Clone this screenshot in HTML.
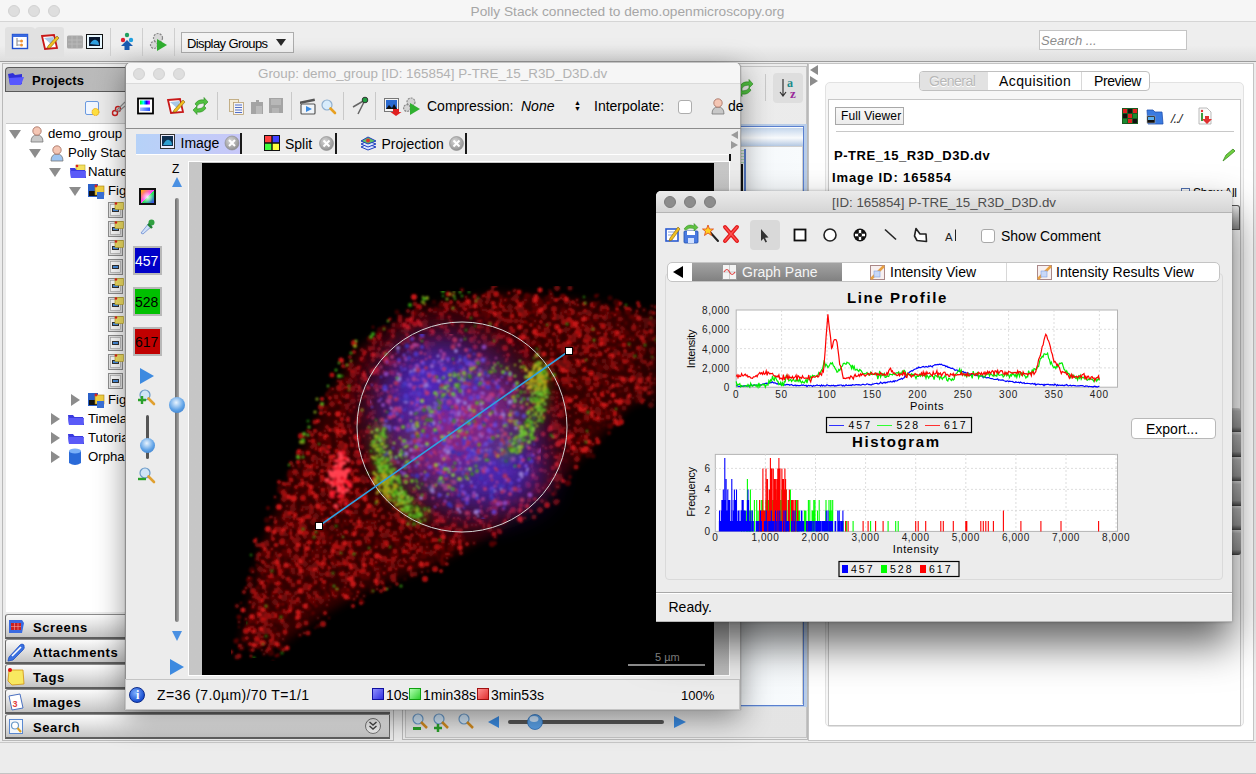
<!DOCTYPE html>
<html><head><meta charset="utf-8">
<style>
*{box-sizing:border-box;margin:0;padding:0}
html,body{width:1256px;height:774px;overflow:hidden;background:#ececec;font-family:"Liberation Sans",sans-serif;font-size:13px;color:#000;position:relative}
.a{position:absolute}
.tl{position:absolute;width:12px;height:12px;border-radius:50%;background:#dedede;border:1px solid #d2d2d2}
.t{position:absolute;white-space:nowrap;line-height:1}
.b{font-weight:bold}
.sep{position:absolute;width:1px;background:#c9c9c9}
.tri-d{position:absolute;width:0;height:0;border-left:6px solid transparent;border-right:6px solid transparent;border-top:10px solid #8a8a8a}
.tri-r{position:absolute;width:0;height:0;border-top:6px solid transparent;border-bottom:6px solid transparent;border-left:10px solid #8a8a8a}
.acc{position:absolute;left:5px;width:385px;height:25px;border-left:1px solid #6a6a6a;border-bottom:2px solid #5e5e5e;border-top:1px solid #8a8a8a;border-radius:3px 0 0 0;background:linear-gradient(#fafafa,#e6e6e6 40%,#c4c4c4);}
.acc span{position:absolute;left:27px;top:5px;font-weight:bold;font-size:13px;letter-spacing:0.6px}
</style></head><body>

<!-- main title bar -->
<div class="a" style="left:0;top:0;width:1256px;height:22px;background:#f6f6f6;border-bottom:1px solid #d5d5d5"></div>
<div class="tl" style="left:8px;top:5px"></div>
<div class="tl" style="left:28px;top:5px"></div>
<div class="tl" style="left:48px;top:5px"></div>
<div class="t" style="left:470.5px;top:5px;font-size:13.7px;color:#a6a6a6">Polly Stack connected to demo.openmicroscopy.org</div>

<!-- main toolbar -->
<div class="a" style="left:0;top:22px;width:1256px;height:40px;background:linear-gradient(#eeeeee 60%,#dedede);border-bottom:1px solid #9c9c9c"></div>
<svg class="a" style="left:0;top:22px" width="180" height="40" viewBox="0 22 180 40">
 <path d="M5,57 V30 Q5,27 8,27 H31 Q34,27 35,29 Q36,27 39,27 H61 Q64,27 64,30 V57 Z" fill="#e1e1e1"/>
 <rect x="12.5" y="34.5" width="15" height="14" fill="#fff" stroke="#2050d0" stroke-width="1.4"/>
 <rect x="12.5" y="34.5" width="15" height="2.5" fill="#3a6ae0"/>
 <path d="M17,38 V46 M17,41 H20 M17,45 H20" stroke="#999" stroke-width="1.2" fill="none"/>
 <circle cx="21.5" cy="41" r="1.5" fill="#f09030"/><circle cx="21.5" cy="45" r="1.5" fill="#f09030"/>
 <path d="M42,36 L54,35 L57,48 L45,49 Z" fill="#fff" stroke="#c81818" stroke-width="1.8"/>
 <path d="M44,38 L54,37 L52,45 Z" fill="#a8c8e8"/>
 <path d="M48,46 L57,36 L59,38 L50,48 L47,48 Z" fill="#f0c020" stroke="#806010" stroke-width="0.6"/>
 <rect x="67" y="35.5" width="16" height="13" rx="1.5" fill="#a8a8a8"/>
 <path d="M68,40 H82 M68,44 H82 M72,36 V48 M77,36 V48" stroke="#bcbcbc" stroke-width="0.8"/>
 <rect x="86.5" y="34.5" width="16" height="14" fill="#e8f8ff" stroke="#111" stroke-width="1"/>
 <rect x="89" y="37" width="11" height="9" fill="#0a1830"/>
 <path d="M90,44 Q93,39 96,40 Q99,41 99,45 Z" fill="#30a0e0"/>
 <line x1="110.5" y1="28" x2="110.5" y2="56" stroke="#cfcfcf"/>
 <circle cx="127" cy="35" r="2.2" fill="#20a060"/><circle cx="123" cy="40" r="2.2" fill="#e02030"/><circle cx="131" cy="40" r="2.2" fill="#20a0e0"/>
 <path d="M127,40 L121,46 H124.5 V50 H129.5 V46 H133 Z" fill="#1a5ab0"/>
 <line x1="142.5" y1="28" x2="142.5" y2="56" stroke="#cfcfcf"/>
 <circle cx="158" cy="38" r="4.5" fill="#d8d8d8" stroke="#888" stroke-width="1.2" stroke-dasharray="2,1.2"/>
 <circle cx="154" cy="45" r="3.5" fill="#d8d8d8" stroke="#888" stroke-width="1.2" stroke-dasharray="2,1.2"/>
 <path d="M157,39 L167,45 L157,51 Z" fill="#30b030"/>
 <line x1="174.5" y1="28" x2="174.5" y2="56" stroke="#cfcfcf"/>
</svg>

<div class="t" style="left:1039px;top:30px;width:148px;height:20px;border:1px solid #c4c4c4;background:#fff"></div>
<div class="t" style="left:1041px;top:34px;font-size:13px;font-style:italic;color:#8c8c8c">Search ...</div>
<div class="a" style="left:181px;top:32px;width:113px;height:21px;border:1px solid #adadad;background:#f4f4f4"></div>
<div class="t" style="left:187px;top:36.5px;font-size:13px;letter-spacing:-0.6px">Display Groups</div>
<div class="a" style="left:275.5px;top:39px;width:0;height:0;border-left:5.5px solid transparent;border-right:5.5px solid transparent;border-top:7px solid #2a2a2a"></div>

<!-- status bar -->
<div class="a" style="left:0;top:742px;width:1256px;height:32px;background:#ececec;border-top:1px solid #c8c8c8;border-bottom:1px solid #c4c4c4"></div>

<!-- LEFT PANEL -->
<div class="a" style="left:2px;top:63px;width:392px;height:678px;border:1px solid #b9b9b9;background:#ececec"></div>
<div class="a" style="left:5px;top:67px;width:388px;height:25px;border:1px solid #5a5a5a;border-right:none;border-radius:4px 0 0 0;background:linear-gradient(90deg,#b4b4b4,#c4c4c4 60%,#b0b0b0)"></div>
<div class="t b" style="left:32px;top:74px;font-size:13px;letter-spacing:0.1px">Projects</div>
<svg class="a" style="left:7px;top:71px" width="18" height="16" viewBox="0 0 18 16"><path d="M1,3 L6,2 L8,4 L15,3 L15,13 L3,14 Z" fill="#3030d8"/><path d="M2,7 L17,6 L14,14 L3,14 Z" fill="#5858ff"/></svg>
<svg class="a" style="left:84px;top:100px" width="42" height="18" viewBox="84 100 42 18">
 <rect x="85.5" y="101.5" width="13" height="13" rx="1.5" fill="#f0f6ff" stroke="#6a9ae0"/>
 <circle cx="95.5" cy="112" r="3.5" fill="#ffe040" stroke="#f0a000" stroke-width="1" stroke-dasharray="1.2,0.8"/>
 <circle cx="115" cy="113" r="2.5" fill="none" stroke="#d02020" stroke-width="1.4"/><circle cx="118" cy="109" r="2.5" fill="none" stroke="#d02020" stroke-width="1.4"/>
 <path d="M116,111 L125,102 M118,112 L125,106" stroke="#909090" stroke-width="1.2"/>
</svg>
<div class="a" style="left:6px;top:123px;width:387px;height:489px;background:#fff;border-top:1px solid #c9c9c9"></div>
<div class="a" style="left:9px;top:130px;width:0;height:0;border-left:6px solid transparent;border-right:6px solid transparent;border-top:9px solid #8c8c8c"></div>
<svg class="a" style="left:29px;top:125px" width="16" height="18" viewBox="0 0 16 18"><path d="M2,17 Q2,10 8,10 Q14,10 14,17 Z" fill="#c8c8c8" stroke="#777" stroke-width="0.8"/><circle cx="8" cy="6" r="4.2" fill="#f4c6b4" stroke="#a06a5a" stroke-width="0.8"/></svg>
<div class="t" style="left:48px;top:127px;font-size:13.2px">demo_group</div>
<div class="a" style="left:29px;top:149px;width:0;height:0;border-left:6px solid transparent;border-right:6px solid transparent;border-top:9px solid #8c8c8c"></div>
<svg class="a" style="left:49px;top:144px" width="16" height="18" viewBox="0 0 16 18"><path d="M2,17 Q2,10 8,10 Q14,10 14,17 Z" fill="#9ec4f0" stroke="#777" stroke-width="0.8"/><circle cx="8" cy="6" r="4.2" fill="#f4c6b4" stroke="#a06a5a" stroke-width="0.8"/></svg>
<div class="t" style="left:68px;top:146px;font-size:13.2px">Polly Stack</div>
<div class="a" style="left:49px;top:168px;width:0;height:0;border-left:6px solid transparent;border-right:6px solid transparent;border-top:9px solid #8c8c8c"></div>
<svg class="a" style="left:69px;top:164px" width="18" height="16" viewBox="0 0 18 16"><rect x="7" y="1" width="9" height="8" fill="#f4e060" stroke="#b8a020" stroke-width="0.6"/><circle cx="8" cy="2" r="1.3" fill="#e02020"/><path d="M1,4 L6,4 L7.5,6 L16,6 L17,14 L2,14 Z" fill="#3a3ae0"/><path d="M1,7 L17,7 L16,14 L2,14 Z" fill="#5a5af8"/></svg>
<div class="t" style="left:88px;top:165px;font-size:13.2px">Nature</div>
<div class="a" style="left:69px;top:187px;width:0;height:0;border-left:6px solid transparent;border-right:6px solid transparent;border-top:9px solid #8c8c8c"></div>
<svg class="a" style="left:87px;top:182px" width="18" height="18" viewBox="0 0 18 18"><rect x="1" y="2" width="10" height="13" fill="#2a60c8"/><rect x="2" y="9" width="8" height="5" fill="#111"/><rect x="8" y="4" width="9" height="9" fill="#f0d040" stroke="#b08010" stroke-width="0.6"/><circle cx="9" cy="4" r="1.4" fill="#e02020"/><rect x="10" y="10" width="7" height="7" fill="#3a70d8"/></svg>
<div class="t" style="left:108px;top:184px;font-size:13.2px">Fig</div>
<svg class="a" style="left:108px;top:202px" width="16" height="16" viewBox="0 0 16 16"><rect x="0.5" y="0.5" width="14" height="15" fill="#e8e8e8" stroke="#909090"/><rect x="2.5" y="2.5" width="10" height="11" fill="#fff" stroke="#a0a0a0" stroke-width="0.6"/><rect x="4" y="6" width="7" height="4" fill="#333"/><rect x="5" y="7" width="5" height="2" fill="#4a90e0"/><rect x="7" y="0.5" width="8.5" height="7" fill="#f6e466" stroke="#b8a020" stroke-width="0.6"/><circle cx="8" cy="1.5" r="1.2" fill="#e02020"/></svg>
<svg class="a" style="left:108px;top:221px" width="16" height="16" viewBox="0 0 16 16"><rect x="0.5" y="0.5" width="14" height="15" fill="#e8e8e8" stroke="#909090"/><rect x="2.5" y="2.5" width="10" height="11" fill="#fff" stroke="#a0a0a0" stroke-width="0.6"/><rect x="4" y="6" width="7" height="4" fill="#333"/><rect x="5" y="7" width="5" height="2" fill="#4a90e0"/><rect x="7" y="0.5" width="8.5" height="7" fill="#f6e466" stroke="#b8a020" stroke-width="0.6"/><circle cx="8" cy="1.5" r="1.2" fill="#e02020"/></svg>
<svg class="a" style="left:108px;top:240px" width="16" height="16" viewBox="0 0 16 16"><rect x="0.5" y="0.5" width="14" height="15" fill="#e8e8e8" stroke="#909090"/><rect x="2.5" y="2.5" width="10" height="11" fill="#fff" stroke="#a0a0a0" stroke-width="0.6"/><rect x="4" y="6" width="7" height="4" fill="#333"/><rect x="5" y="7" width="5" height="2" fill="#4a90e0"/><rect x="7" y="0.5" width="8.5" height="7" fill="#f6e466" stroke="#b8a020" stroke-width="0.6"/><circle cx="8" cy="1.5" r="1.2" fill="#e02020"/></svg>
<svg class="a" style="left:108px;top:259px" width="16" height="16" viewBox="0 0 16 16"><rect x="0.5" y="0.5" width="14" height="15" fill="#e8e8e8" stroke="#909090"/><rect x="2.5" y="2.5" width="10" height="11" fill="#fff" stroke="#a0a0a0" stroke-width="0.6"/><rect x="4" y="6" width="7" height="4" fill="#333"/><rect x="5" y="7" width="5" height="2" fill="#4a90e0"/></svg>
<svg class="a" style="left:108px;top:278px" width="16" height="16" viewBox="0 0 16 16"><rect x="0.5" y="0.5" width="14" height="15" fill="#e8e8e8" stroke="#909090"/><rect x="2.5" y="2.5" width="10" height="11" fill="#fff" stroke="#a0a0a0" stroke-width="0.6"/><rect x="4" y="6" width="7" height="4" fill="#333"/><rect x="5" y="7" width="5" height="2" fill="#4a90e0"/><rect x="7" y="0.5" width="8.5" height="7" fill="#f6e466" stroke="#b8a020" stroke-width="0.6"/><circle cx="8" cy="1.5" r="1.2" fill="#e02020"/></svg>
<svg class="a" style="left:108px;top:297px" width="16" height="16" viewBox="0 0 16 16"><rect x="0.5" y="0.5" width="14" height="15" fill="#e8e8e8" stroke="#909090"/><rect x="2.5" y="2.5" width="10" height="11" fill="#fff" stroke="#a0a0a0" stroke-width="0.6"/><rect x="4" y="6" width="7" height="4" fill="#333"/><rect x="5" y="7" width="5" height="2" fill="#4a90e0"/><rect x="7" y="0.5" width="8.5" height="7" fill="#f6e466" stroke="#b8a020" stroke-width="0.6"/><circle cx="8" cy="1.5" r="1.2" fill="#e02020"/></svg>
<svg class="a" style="left:108px;top:316px" width="16" height="16" viewBox="0 0 16 16"><rect x="0.5" y="0.5" width="14" height="15" fill="#e8e8e8" stroke="#909090"/><rect x="2.5" y="2.5" width="10" height="11" fill="#fff" stroke="#a0a0a0" stroke-width="0.6"/><rect x="4" y="6" width="7" height="4" fill="#333"/><rect x="5" y="7" width="5" height="2" fill="#4a90e0"/><rect x="7" y="0.5" width="8.5" height="7" fill="#f6e466" stroke="#b8a020" stroke-width="0.6"/><circle cx="8" cy="1.5" r="1.2" fill="#e02020"/></svg>
<svg class="a" style="left:108px;top:335px" width="16" height="16" viewBox="0 0 16 16"><rect x="0.5" y="0.5" width="14" height="15" fill="#e8e8e8" stroke="#909090"/><rect x="2.5" y="2.5" width="10" height="11" fill="#fff" stroke="#a0a0a0" stroke-width="0.6"/><rect x="4" y="6" width="7" height="4" fill="#333"/><rect x="5" y="7" width="5" height="2" fill="#4a90e0"/></svg>
<svg class="a" style="left:108px;top:354px" width="16" height="16" viewBox="0 0 16 16"><rect x="0.5" y="0.5" width="14" height="15" fill="#e8e8e8" stroke="#909090"/><rect x="2.5" y="2.5" width="10" height="11" fill="#fff" stroke="#a0a0a0" stroke-width="0.6"/><rect x="4" y="6" width="7" height="4" fill="#333"/><rect x="5" y="7" width="5" height="2" fill="#4a90e0"/><rect x="7" y="0.5" width="8.5" height="7" fill="#f6e466" stroke="#b8a020" stroke-width="0.6"/><circle cx="8" cy="1.5" r="1.2" fill="#e02020"/></svg>
<svg class="a" style="left:108px;top:373px" width="16" height="16" viewBox="0 0 16 16"><rect x="0.5" y="0.5" width="14" height="15" fill="#e8e8e8" stroke="#909090"/><rect x="2.5" y="2.5" width="10" height="11" fill="#fff" stroke="#a0a0a0" stroke-width="0.6"/><rect x="4" y="6" width="7" height="4" fill="#333"/><rect x="5" y="7" width="5" height="2" fill="#4a90e0"/></svg>
<div class="a" style="left:71px;top:394px;width:0;height:0;border-top:6px solid transparent;border-bottom:6px solid transparent;border-left:9px solid #8c8c8c"></div>
<svg class="a" style="left:87px;top:391px" width="18" height="18" viewBox="0 0 18 18"><rect x="1" y="2" width="10" height="13" fill="#2a60c8"/><rect x="2" y="9" width="8" height="5" fill="#111"/><rect x="8" y="4" width="9" height="9" fill="#f0d040" stroke="#b08010" stroke-width="0.6"/><circle cx="9" cy="4" r="1.4" fill="#e02020"/><rect x="10" y="10" width="7" height="7" fill="#3a70d8"/></svg>
<div class="t" style="left:108px;top:393px;font-size:13.2px">Fig</div>
<div class="a" style="left:51px;top:413px;width:0;height:0;border-top:6px solid transparent;border-bottom:6px solid transparent;border-left:9px solid #8c8c8c"></div>
<svg class="a" style="left:67px;top:411px" width="18" height="16" viewBox="0 0 18 16"><path d="M1,4 L6,4 L7.5,6 L16,6 L17,14 L2,14 Z" fill="#3a3ae0"/><path d="M1,7 L17,7 L16,14 L2,14 Z" fill="#5a5af8"/></svg>
<div class="t" style="left:88px;top:412px;font-size:13.2px">Timela</div>
<div class="a" style="left:51px;top:432px;width:0;height:0;border-top:6px solid transparent;border-bottom:6px solid transparent;border-left:9px solid #8c8c8c"></div>
<svg class="a" style="left:67px;top:430px" width="18" height="16" viewBox="0 0 18 16"><path d="M1,4 L6,4 L7.5,6 L16,6 L17,14 L2,14 Z" fill="#3a3ae0"/><path d="M1,7 L17,7 L16,14 L2,14 Z" fill="#5a5af8"/></svg>
<div class="t" style="left:88px;top:431px;font-size:13.2px">Tutoria</div>
<div class="a" style="left:51px;top:451px;width:0;height:0;border-top:6px solid transparent;border-bottom:6px solid transparent;border-left:9px solid #8c8c8c"></div>
<svg class="a" style="left:68px;top:448px" width="14" height="18" viewBox="0 0 14 18"><path d="M1,3 L1,15 Q7,19 13,15 L13,3 Z" fill="#2a6ad8"/><ellipse cx="7" cy="3" rx="6" ry="2.5" fill="#7ab0f8"/></svg>
<div class="t" style="left:88px;top:450px;font-size:13.2px">Orpha</div>

<div class="acc" style="top:614px"><span>Screens</span></div>
<div class="acc" style="top:639px"><span>Attachments</span></div>
<div class="acc" style="top:664px"><span>Tags</span></div>
<div class="acc" style="top:689px"><span>Images</span></div>
<div class="acc" style="top:714px;width:385px;border-right:1px solid #6a6a6a"><span>Search</span></div>
<svg class="a" style="left:5px;top:614px" width="24" height="125" viewBox="5 614 24 125">
 <path d="M9,620 L22,620 L24,623 L22,633 L9,633 Z" fill="#3a6ae0"/><rect x="11" y="623" width="10" height="7" fill="#c82020"/><path d="M11,626.5 H21 M14.5,623 V630 M18,623 V630" stroke="#f4a0a0" stroke-width="0.6"/>
 <path d="M9,657 L20,645 Q22,643 24,645 L24,646 Q25,648 23,650 L13,660 L8,661 Z" fill="#3a70e0" stroke="#2050c0" stroke-width="0.8"/><path d="M12,656 L21,647" stroke="#fff" stroke-width="1.6"/>
 <path d="M9,670 L23,670 L24,684 L12,685 L8,681 Z" fill="#f8e860" stroke="#d09010" stroke-width="0.8"/><circle cx="10" cy="670" r="2" fill="#e01010"/>
 <path d="M9,696 L20,694 L23,708 L12,710 Z" fill="#fff" stroke="#4a70c0" stroke-width="1"/><text x="12.5" y="707" font-family="Liberation Sans" font-size="9" font-weight="bold" fill="#e04040">3</text>
 <rect x="9.5" y="719.5" width="13" height="14" fill="#f4f8fc" stroke="#5a88d0"/><circle cx="15" cy="725.5" r="3.5" fill="#fff" stroke="#6a9ac8" stroke-width="1.2"/><path d="M17.5,728 L21,732" stroke="#e0a020" stroke-width="2"/>
</svg>
<svg class="a" style="left:364px;top:717px" width="18" height="18" viewBox="0 0 18 18"><circle cx="9" cy="9" r="7.5" fill="#f0f0f0" stroke="#777" stroke-width="1"/><path d="M5.5,5 L9,8 L12.5,5 M5.5,9 L9,12 L12.5,9" stroke="#444" stroke-width="1.4" fill="none"/></svg>

<!-- MIDDLE PANEL -->
<div class="a" style="left:402px;top:63px;width:406px;height:677px;border:1px solid #b9b9b9;background:#ececec"></div>
<div class="a" style="left:405px;top:66px;width:402px;height:672px;border:1px solid #c4c4c4;background:linear-gradient(#ececec,#e4e4e4)"></div>
<div class="a" style="left:773px;top:73px;width:30px;height:30px;background:#dedede;border-radius:4px"></div>
<div class="sep" style="left:765px;top:74px;height:27px"></div>
<svg class="a" style="left:738px;top:79px" width="18" height="18" viewBox="193 97 18 18">
 <path d="M195,104 Q198,99 204,100 L204,97.5 L208,102 L204,106 L204,103 Q199,103 197,106 Z" fill="#50c040" stroke="#2a8a20" stroke-width="0.6"/>
 <path d="M206,108 Q203,113 197,112 L197,114.5 L193,110 L197,106 L197,109 Q202,109 204,106 Z" fill="#50c040" stroke="#2a8a20" stroke-width="0.6"/>
</svg>


<svg class="a" style="left:776px;top:76px" width="26" height="24" viewBox="0 0 26 24"><path d="M7,3 V19 M4,16 L7,20 L10,16" stroke="#333" stroke-width="1.2" fill="none"/><text x="11" y="11" font-family="Liberation Serif" font-weight="bold" font-size="12" fill="#1a8a8a">a</text><text x="14" y="22" font-family="Liberation Serif" font-weight="bold" font-size="13" fill="#9a2a9a">z</text></svg>
<div class="a" style="left:405px;top:124px;width:402px;height:583px;background:#b9cde8"></div>
<div class="a" style="left:406px;top:126px;width:398px;height:580px;border:1.5px solid #5a80d0;background:linear-gradient(90deg,#e4e9ef,#f8fbfd)"></div>
<div class="a" style="left:407.5px;top:127.5px;width:395px;height:18px;background:linear-gradient(#c4d6ec,#f8fafc 55%,#b4c8e2)"></div>
<div class="a" style="left:407.5px;top:145.5px;width:395px;height:1.5px;background:#cfcfcf"></div>
<div class="a" style="left:802px;top:147px;width:1px;height:557px;background:#d0d0d0"></div>
<div class="a" style="left:744px;top:149px;width:1.5px;height:400px;background:#5a80d0"></div>
<div class="a" style="left:741px;top:164px;width:2px;height:385px;background:#111"></div>
<div class="a" style="left:741px;top:150px;width:3px;height:14px;background:repeating-linear-gradient(#b0d8b0 0,#b0d8b0 1px,#e8e8e8 1px,#e8e8e8 3px)"></div>
<svg class="a" style="left:410px;top:712px" width="280" height="22" viewBox="410 712 280 22">
 <circle cx="418" cy="719" r="5" fill="#cfe4f6" stroke="#6a9ac8" stroke-width="1.2"/><path d="M421,722 L427,728" stroke="#d08a20" stroke-width="2.5"/><rect x="413" y="727" width="8" height="3" fill="#2aa02a"/>
 <circle cx="439" cy="719" r="5" fill="#cfe4f6" stroke="#6a9ac8" stroke-width="1.2"/><path d="M442,722 L448,728" stroke="#d08a20" stroke-width="2.5"/><path d="M434,728 h8 M438,724 v8" stroke="#2aa02a" stroke-width="2.5"/>
 <circle cx="464" cy="719" r="5" fill="#cfe4f6" stroke="#6a9ac8" stroke-width="1.2"/><path d="M467,722 L473,728" stroke="#d08a20" stroke-width="2.5"/>
 <path d="M499,716 L488,722 L499,728 Z" fill="#3a8ae0"/>
 <rect x="508" y="720" width="156" height="4" rx="2" fill="#555"/>
 <circle cx="535" cy="722" r="7.5" fill="#5aa0e6" stroke="#3070b8" stroke-width="0.8"/><ellipse cx="534" cy="719" rx="4.5" ry="3" fill="#e8f4ff" opacity="0.8"/>
 <path d="M674,716 L686,722 L674,728 Z" fill="#3a8ae0"/>
</svg>


<!-- RIGHT PANEL -->
<div class="a" style="left:808px;top:63px;width:446px;height:678px;border:1px solid #c4c4c4;background:#fff"></div>
<div class="a" style="left:825px;top:82px;width:419px;height:645px;border:1px solid #e2e2e2;border-radius:5px;background:#f6f6f6"></div>
<div class="a" style="left:828px;top:99px;width:413px;height:627px;border:1px solid #c8c8c8;background:linear-gradient(#fff,#fff)"></div>
<div class="a" style="left:919px;top:71px;width:231px;height:20px;border:1px solid #c0c0c0;border-radius:4px;background:#fff;overflow:hidden">
  <div class="a" style="left:0;top:0;width:68px;height:19px;background:#e2e2e2"></div>
  <div class="a" style="left:161px;top:0;width:1px;height:19px;background:#d8d8d8"></div>
</div>
<div class="t" style="left:929px;top:74px;font-size:14px;color:#b8b8b8;text-shadow:0 1px 0 #fff;letter-spacing:-0.5px">General</div>
<div class="t" style="left:999px;top:74px;font-size:14px;letter-spacing:0.4px">Acquisition</div>
<div class="t" style="left:1094px;top:74px;font-size:14px;letter-spacing:-0.4px">Preview</div>
<div class="a" style="left:835px;top:107px;width:69px;height:18px;border:1px solid #a8a8a8;background:linear-gradient(#f8f8f8,#ececec)"></div>
<div class="t" style="left:841px;top:110px;font-size:12px;letter-spacing:0.1px">Full Viewer</div>
<svg class="a" style="left:1120px;top:106px" width="120" height="58" viewBox="1120 106 120 58">
 <rect x="1122" y="108" width="16" height="16" fill="#1a5a20"/>
 <rect x="1123" y="109" width="4" height="4" fill="#e02020"/><rect x="1128" y="109" width="4" height="4" fill="#111"/><rect x="1133" y="109" width="4" height="4" fill="#e02020"/>
 <rect x="1123" y="114" width="4" height="4" fill="#111"/><rect x="1128" y="114" width="4" height="4" fill="#e02020"/><rect x="1133" y="114" width="4" height="4" fill="#1a8a30"/>
 <rect x="1123" y="119" width="4" height="4" fill="#1a8a30"/><rect x="1128" y="119" width="4" height="4" fill="#e02020"/><rect x="1133" y="119" width="4" height="4" fill="#111"/>
 <path d="M1147,110 L1153,110 L1155,112 L1162,112 L1163,124 L1148,124 Z" fill="#3a7ae0" stroke="#2050b0" stroke-width="0.8"/>
 <rect x="1147" y="116" width="8" height="7" fill="#111" stroke="#aaa" stroke-width="0.6"/><rect x="1148" y="117" width="6" height="3" fill="#5ab0f0"/>
 <text x="1171" y="123" font-family="Liberation Sans" font-style="italic" font-size="13" fill="#222" letter-spacing="-1">/../</text>
 <path d="M1199,108 L1207,108 L1211,112 L1211,124 L1199,124 Z" fill="#fafafa" stroke="#aaa" stroke-width="0.8"/>
 <rect x="1201" y="113" width="2" height="8" fill="#3a9a3a"/><circle cx="1202" cy="111" r="1.2" fill="#e03030"/>
 <path d="M1205,116 H1209 V119 H1212 L1207,124 L1202,119 H1205 Z" fill="#e03030"/>
 <path d="M1223,161 L1226,155 L1233,149 L1235,151 L1228,157 Z" fill="#70d040" stroke="#3a8a20" stroke-width="0.8"/>
</svg>
<div class="a" style="left:836px;top:131px;width:398px;height:1px;background:#c8c8c8"></div>
<div class="t b" style="left:834px;top:149px;font-size:13px;letter-spacing:0.55px">P-TRE_15_R3D_D3D.dv</div>
<div class="t b" style="left:832px;top:171px;font-size:13px;letter-spacing:0.9px">Image ID: 165854</div>
<div class="t b" style="left:832px;top:189px;font-size:13px;letter-spacing:0.9px">Owner: Polly Stack</div>
<div class="a" style="left:1181px;top:188px;width:9px;height:9px;border:1px solid #5070b0;background:#fff"></div>
<div class="t" style="left:1193px;top:187px;font-size:12px;letter-spacing:-0.3px">Show All</div>
<div class="a" style="left:810px;top:65px;width:0;height:0;border-top:5px solid transparent;border-bottom:5px solid transparent;border-right:8px solid #8c8c8c"></div>
<div class="a" style="left:810px;top:76px;width:0;height:0;border-top:5px solid transparent;border-bottom:5px solid transparent;border-left:8px solid #8c8c8c"></div>
<div class="a" style="left:1232px;top:205px;width:8px;height:25px;background:linear-gradient(#eeeeee,#8c8c8c);border:1px solid #555;border-left:none;border-radius:0 3px 0 0"></div>
<div class="a" style="left:1232px;top:408px;width:9px;height:147px;background:repeating-linear-gradient(#d8d8d8 0,#b4b4b4 3px,#989898 19px,#5a5a5a 23px,#3a3a3a 24.5px);border-radius:0 3px 3px 0"></div>



<!-- IMAGE WINDOW -->
<div class="a" style="left:125px;top:63px;width:616px;height:647px;background:#ececec;box-shadow:0 8px 30px rgba(0,0,0,0.42),0 0 1px rgba(0,0,0,0.6);border-left:1px solid #8e8e8e;border-right:1px solid #a8a8a8;border-radius:5px 5px 0 0;overflow:hidden">
 <div class="a" style="left:0;top:0;width:616px;height:21px;background:#f6f6f6;border-bottom:1px solid #dadada"></div>
</div>
<div class="tl" style="left:133px;top:68px"></div>
<div class="tl" style="left:153px;top:68px"></div>
<div class="tl" style="left:173px;top:68px"></div>
<div class="t" style="left:258px;top:67px;font-size:13.4px;color:#b2b2b2">Group: demo_group [ID: 165854] P-TRE_15_R3D_D3D.dv</div>
<!-- toolbar -->
<div class="a" style="left:125px;top:128px;width:616px;height:1px;background:#8c8c8c"></div>
<svg class="a" style="left:130px;top:90px" width="300" height="32" viewBox="130 90 300 32">
 <defs><linearGradient id="rb" x1="0" x2="1"><stop offset="0" stop-color="#0f0"/><stop offset="0.35" stop-color="#0ff"/><stop offset="0.65" stop-color="#00f"/><stop offset="1" stop-color="#f0f"/></linearGradient>
 <linearGradient id="bb" x1="0" x2="1"><stop offset="0" stop-color="#a8c0ff"/><stop offset="1" stop-color="#2050ff"/></linearGradient></defs>
 <rect x="138" y="98.5" width="15" height="15" fill="#fff" stroke="#000" stroke-width="1.8"/>
 <rect x="140" y="100.5" width="10" height="4" fill="url(#rb)"/><rect x="140" y="107.5" width="10" height="3.5" fill="url(#bb)"/>
 <path d="M168,100 L180,99 L183,112 L171,113 Z" fill="#fff" stroke="#c81818" stroke-width="1.8"/>
 <path d="M170,102 L180,101 L178,109 Z" fill="#a8c8e8"/>
 <path d="M174,110 L183,100 L185,102 L176,112 L173,112 Z" fill="#f0c020" stroke="#806010" stroke-width="0.6"/>
 <path d="M195,104 Q198,99 204,100 L204,97.5 L208,102 L204,106 L204,103 Q199,103 197,106 Z" fill="#50c040" stroke="#2a8a20" stroke-width="0.6"/>
 <path d="M206,108 Q203,113 197,112 L197,114.5 L193,110 L197,106 L197,109 Q202,109 204,106 Z" fill="#50c040" stroke="#2a8a20" stroke-width="0.6"/>
 <rect x="229.5" y="99.5" width="9" height="12" fill="#f4ecd8" stroke="#b8a070" stroke-width="0.8"/>
 <rect x="233.5" y="102.5" width="10" height="12" fill="#f4f4f8" stroke="#b8a070" stroke-width="0.8"/>
 <path d="M235,105 H242 M235,107.5 H242 M235,110 H242 M235,112.5 H242" stroke="#4060c0" stroke-width="0.9"/>
 <path d="M251,102 H256 V100 H259 V102 H263 V114 H251 Z" fill="#a4a4a4"/><rect x="256" y="106" width="6" height="8" fill="#bababa"/>
 <rect x="269" y="98" width="14" height="15" fill="#a4a4a4"/><rect x="271" y="99" width="10" height="6" fill="#b8b8b8"/><rect x="272" y="108" width="7" height="5" fill="#b4b4b4"/>
 <path d="M300,104 L315,101 L314.5,98.5 L300,101.5 Z" fill="#555"/>
 <rect x="301" y="104" width="14" height="10" rx="1" fill="#f0f4f8" stroke="#555" stroke-width="1.2"/>
 <path d="M306,106 L312,109 L306,112 Z" fill="#3a8ae0"/>
 <circle cx="327" cy="105" r="5" fill="#d8ecfc" stroke="#90b0d0" stroke-width="1.2"/>
 <path d="M330.5,108.5 L335,113" stroke="#e8a020" stroke-width="2.6" stroke-linecap="round"/>
 <path d="M365,100 L353,107 M365,100 L358,114" stroke="#666" stroke-width="1.5"/>
 <circle cx="365" cy="100" r="2.8" fill="#20a040" stroke="#333" stroke-width="1"/>
 <rect x="384.5" y="98.5" width="14" height="13" fill="#f4f4f4" stroke="#777"/>
 <rect x="386" y="100" width="11" height="9" fill="#2a6ad0"/><path d="M386,109 L389,105 L392,108 L394,104 L397,109 Z" fill="#111"/>
 <path d="M393,109 H399 V112 H401.5 L396,116 L390.5,112 H393 Z" fill="#e02020"/>
 <circle cx="411" cy="102" r="4" fill="#d4d4d4" stroke="#888" stroke-width="1.2" stroke-dasharray="2,1"/>
 <circle cx="407" cy="108" r="3.4" fill="#d4d4d4" stroke="#888" stroke-width="1.2" stroke-dasharray="2,1"/>
 <path d="M410,103 L420,109 L410,115 Z" fill="#30b030"/>
</svg>
<svg class="a" style="left:710px;top:97px" width="16" height="18" viewBox="0 0 16 18"><path d="M2,17 Q2,10 8,10 Q14,10 14,17 Z" fill="#c8c8c8" stroke="#777" stroke-width="0.8"/><circle cx="8" cy="6" r="4.2" fill="#f4c6b4" stroke="#a06a5a" stroke-width="0.8"/></svg>
<div class="sep" style="left:217px;top:92px;height:28px"></div>
<div class="sep" style="left:291px;top:92px;height:28px"></div>
<div class="sep" style="left:343px;top:92px;height:28px"></div>
<div class="sep" style="left:375px;top:92px;height:28px"></div>
<div class="t" style="left:427px;top:99px;font-size:14px">Compression:</div>
<div class="t" style="left:521px;top:99px;font-size:14px;font-style:italic">None</div>
<div class="t" style="left:574px;top:100px;font-size:7px;line-height:6px">&#9650;<br>&#9660;</div>
<div class="t" style="left:594px;top:99px;font-size:14px">Interpolate:</div>
<div class="a" style="left:678px;top:100px;width:14px;height:14px;border:1px solid #adadad;border-radius:3px;background:#fff"></div>
<div class="t" style="left:728px;top:99px;font-size:14px">de</div>
<!-- tabs -->
<div class="a" style="left:136px;top:134px;width:104px;height:20px;background:linear-gradient(90deg,#b6d2f8,#c8c8f8)"></div>
<div class="a" style="left:240px;top:133px;width:1.5px;height:21px;background:#1a1a1a"></div>
<div class="a" style="left:335px;top:133px;width:1.5px;height:21px;background:#1a1a1a"></div>
<div class="a" style="left:465px;top:133px;width:1.5px;height:21px;background:#1a1a1a"></div>
<svg class="a" style="left:136px;top:130px" width="340" height="26" viewBox="136 130 340 26">
 <defs><radialGradient id="xg" cx="0.4" cy="0.35" r="0.7"><stop offset="0" stop-color="#d8d8d8"/><stop offset="1" stop-color="#8c8c8c"/></radialGradient></defs>
 <rect x="160.5" y="134.5" width="14" height="14" fill="#eef" stroke="#333" stroke-width="1"/><rect x="162" y="136" width="11" height="10" fill="#103050"/><path d="M163,145 Q166,139 169,140 Q172,141 172,145 Z" fill="#30a0d0"/>
 <circle cx="232" cy="143" r="7" fill="url(#xg)" stroke="#8a8a8a" stroke-width="0.6"/><path d="M229,140 L235,146 M235,140 L229,146" stroke="#fff" stroke-width="2"/>
 <rect x="265" y="136" width="7" height="7" fill="#ff4040"/><rect x="272" y="136" width="7" height="7" fill="#4040ff"/><rect x="265" y="143" width="7" height="7" fill="#40ff40"/><rect x="272" y="143" width="7" height="7" fill="#ffff40"/>
 <path d="M272,136 V150 M265,143 H279" stroke="#111" stroke-width="1.4"/><rect x="264.5" y="135.5" width="15" height="15" fill="none" stroke="#111" stroke-width="1"/>
 <circle cx="326.5" cy="143.5" r="7" fill="url(#xg)" stroke="#8a8a8a" stroke-width="0.6"/><path d="M323.5,140.5 L329.5,146.5 M329.5,140.5 L323.5,146.5" stroke="#fff" stroke-width="2"/>
 <path d="M361,147 L368,150 L376,147 L368,144 Z" fill="#e0e8ff" stroke="#2040c0" stroke-width="1"/>
 <path d="M361,144 L368,147 L376,144 L368,141 Z" fill="#e0e8ff" stroke="#2040c0" stroke-width="1"/>
 <path d="M361,141 L368,144 L376,141 L368,137 Z" fill="#60c060" stroke="#2040c0" stroke-width="1"/><circle cx="368" cy="140.5" r="2" fill="#e03030"/>
 <circle cx="456.5" cy="143.5" r="7" fill="url(#xg)" stroke="#8a8a8a" stroke-width="0.6"/><path d="M453.5,140.5 L459.5,146.5 M459.5,140.5 L453.5,146.5" stroke="#fff" stroke-width="2"/>
</svg>
<div class="t" style="left:180.5px;top:135.5px;font-size:14px">Image</div>
<div class="t" style="left:285px;top:137px;font-size:14px">Split</div>
<div class="t" style="left:381.5px;top:137px;font-size:14px">Projection</div>
<div class="a" style="left:136px;top:154px;width:593px;height:1px;background:#fff"></div>
<div class="a" style="left:729px;top:154px;width:2px;height:7px;background:#111"></div>
<div class="a" style="left:730.5px;top:130.5px;width:0;height:0;border-top:4px solid transparent;border-bottom:4px solid transparent;border-right:7px solid #9a9a9a"></div>
<div class="a" style="left:730.5px;top:141px;width:0;height:0;border-top:4px solid transparent;border-bottom:4px solid transparent;border-left:7px solid #9a9a9a"></div>
<!-- image panel -->
<div class="a" style="left:188px;top:161px;width:542px;height:515px;background:#fff"></div>
<div class="a" style="left:189px;top:162px;width:540px;height:513px;background:linear-gradient(90deg,#c6c6c6,#c8c8c8)"></div>
<div class="a" style="left:714px;top:162px;width:15px;height:513px;background:linear-gradient(#c8c8c8,#bcbcbc)"></div>
<svg class="a" style="left:202px;top:163px" width="512" height="512" viewBox="202 163 512 512">
<defs>
 <filter id="sb" x="0" y="0" width="100%" height="100%"><feGaussianBlur stdDeviation="1.3"/></filter>
 <filter id="bg" x="-30%" y="-30%" width="160%" height="160%"><feGaussianBlur stdDeviation="9"/></filter>
 <filter id="bg2" x="-50%" y="-50%" width="200%" height="200%"><feGaussianBlur stdDeviation="18"/></filter>
 <filter id="bg3" x="-50%" y="-50%" width="200%" height="200%"><feGaussianBlur stdDeviation="5"/></filter>
</defs>
<rect x="202" y="163" width="512" height="512" fill="#000"/>
<g style="isolation:isolate">
<path filter="url(#bg3)" opacity="0.7" fill="#4a0505" d="M240,645 L248,610 L263,542 L293,472 L327,400 L360,347 L418,309 L497,293 L575,300 L650,314 L720,322 L720,385 L632,404 L604,432 L570,470 L546,498 L490,535 L432,566 L370,588 L320,616 L280,646 Z"/>
<g filter="url(#sb)">
<path d="M422 536h0M548 412h0M375 569h0M595 384h0M277 567h0M385 558h0M423 324h0M398 516h0M320 434h0M312 435h0M313 599h0M296 487h0M322 568h0M409 538h0M280 574h0M263 562h0M347 523h0M479 502h0M321 510h0M541 335h0M663 333h0M579 406h0M625 351h0M576 397h0M641 399h0M356 380h0M585 451h0M623 356h0M375 528h0M610 328h0M269 615h0M527 443h0M535 391h0M525 367h0M274 637h0M368 542h0M508 355h0M447 309h0M267 651h0M585 311h0M426 347h0M505 521h0M585 352h0M399 410h0M576 405h0M370 349h0M597 439h0M437 373h0M500 313h0M374 370h0M290 528h0M361 526h0M552 379h0M301 526h0M419 458h0M325 613h0M457 512h0M549 430h0M622 369h0M356 495h0M638 303h0M431 385h0M469 314h0M393 336h0M557 360h0M654 339h0M301 544h0M310 586h0M451 302h0M284 484h0M453 525h0M420 503h0M572 326h0M431 533h0M474 332h0M306 586h0M511 328h0M368 574h0M339 402h0M578 332h0M374 428h0M488 316h0M307 570h0M305 472h0M377 372h0M298 599h0M347 390h0M440 388h0M467 544h0M305 563h0M379 338h0M308 485h0M592 400h0M481 363h0M290 567h0M323 509h0M383 372h0M273 539h0M418 520h0M351 515h0M341 574h0M639 306h0M656 307h0M400 325h0M595 394h0M504 319h0M642 402h0M445 311h0M666 399h0M497 449h0M343 366h0M315 522h0M420 468h0M393 558h0M290 601h0M598 418h0M330 398h0M460 331h0M343 473h0M641 388h0M359 456h0M460 504h0M450 529h0M346 561h0M423 428h0M559 346h0M279 482h0M276 616h0M442 542h0M427 382h0M352 474h0M341 500h0M297 550h0M350 487h0M337 509h0M450 528h0M310 491h0M486 295h0M390 500h0M517 301h0M280 597h0M321 579h0M471 486h0M590 388h0M377 584h0M413 338h0M372 430h0M364 495h0M341 505h0M250 644h0M527 350h0M368 508h0M411 567h0M326 480h0M277 604h0M593 412h0M341 489h0M329 414h0M260 598h0M314 474h0M329 464h0M257 622h0M566 402h0M651 383h0M595 388h0M358 445h0M483 486h0M644 331h0M274 593h0M307 503h0M354 352h0M403 343h0M468 518h0M585 400h0M596 403h0M365 352h0M441 571h0M402 415h0M470 332h0M645 362h0M566 302h0M669 360h0M362 534h0M362 410h0M357 470h0M330 457h0M541 470h0M353 606h0M564 383h0M536 356h0M443 380h0M570 337h0M584 304h0M432 409h0M323 479h0M554 315h0M263 597h0M352 462h0M428 399h0M374 339h0M421 437h0M407 320h0M277 591h0M329 568h0M564 367h0M361 603h0M482 427h0M364 354h0M661 330h0" stroke="#ae1010" stroke-width="4" stroke-linecap="round"/>
<path d="M357 569h0M461 530h0M561 478h0M314 603h0M344 594h0M650 387h0M386 561h0M395 503h0M267 557h0M291 608h0M499 317h0M396 486h0M275 597h0M335 545h0M652 392h0M411 561h0M274 578h0M414 452h0M310 539h0M525 392h0M358 417h0M296 593h0M283 540h0M353 501h0M391 480h0M399 565h0M404 509h0M446 530h0M388 520h0M300 560h0M643 340h0M662 376h0M432 482h0M540 347h0M350 357h0M395 515h0M443 485h0M299 574h0M624 401h0M607 315h0M564 414h0M350 509h0M403 417h0M581 354h0M471 516h0M542 501h0M530 347h0M495 399h0M373 350h0M390 497h0M421 352h0M516 308h0M577 318h0M624 381h0M560 455h0M341 389h0M562 313h0M477 377h0M362 350h0M267 542h0M451 540h0M362 497h0M520 352h0M470 307h0M361 585h0M271 625h0M305 529h0M442 450h0M288 529h0M513 299h0M509 371h0M566 406h0M348 405h0M314 577h0M432 466h0M494 514h0M569 383h0M593 403h0M381 509h0M569 341h0M615 363h0M364 482h0M510 498h0M509 473h0M288 522h0M499 335h0M449 338h0M457 460h0M289 565h0M622 328h0M353 514h0M608 349h0M325 551h0M259 580h0M310 571h0M351 430h0M429 349h0M259 554h0M324 582h0M620 417h0M586 354h0M299 539h0M254 604h0M317 500h0M323 465h0M267 613h0M570 321h0M644 320h0M641 347h0M359 414h0M554 377h0M358 439h0M278 645h0M415 424h0M622 357h0M395 552h0M346 575h0M634 372h0M605 344h0M588 384h0M630 395h0M642 378h0M626 340h0M527 483h0M568 330h0M636 315h0M324 521h0M358 419h0M257 545h0M283 623h0M237 606h0M347 408h0M359 498h0M653 326h0M270 645h0M537 305h0M518 429h0M324 537h0M556 317h0M521 321h0M341 436h0M433 525h0M488 481h0M328 519h0M381 582h0M312 447h0M492 291h0M575 406h0M345 472h0M408 311h0M444 489h0M419 459h0M610 388h0M388 372h0M554 314h0M511 311h0M660 360h0M570 314h0M305 537h0M260 545h0M363 577h0M414 509h0M401 344h0M292 572h0M546 371h0M521 521h0M346 503h0M581 321h0M328 596h0M391 371h0M542 389h0M455 538h0M441 560h0M587 360h0M536 337h0M483 373h0M628 398h0M295 548h0M466 464h0M362 392h0M557 398h0M353 505h0M485 376h0M348 418h0M486 358h0M621 400h0M481 305h0M322 464h0M580 440h0M620 304h0M259 634h0M339 446h0M335 516h0M507 502h0M626 380h0M545 471h0M409 524h0M292 602h0M630 310h0M538 390h0M576 431h0M482 513h0" stroke="#820a0a" stroke-width="4" stroke-linecap="round"/>
<path d="M532 477h0M305 474h0M602 394h0M268 553h0M547 326h0M574 349h0M456 416h0M644 342h0M440 520h0M291 480h0M375 515h0M427 564h0M598 442h0M398 477h0M610 356h0M336 429h0M480 396h0M488 363h0M295 524h0M332 375h0M401 528h0M371 525h0M670 385h0M313 466h0M505 335h0M432 540h0M563 366h0M460 547h0M347 500h0M399 383h0M336 592h0M423 536h0M623 338h0M395 551h0M337 451h0M512 316h0M256 594h0M536 327h0M299 582h0M324 508h0M667 396h0M366 379h0M381 429h0M273 640h0M362 359h0M630 370h0M613 333h0M286 519h0M600 354h0M605 338h0M582 384h0M410 546h0M411 367h0M454 525h0M338 485h0M410 548h0M486 517h0M572 322h0M341 443h0M426 552h0M280 571h0M618 353h0M618 385h0M651 323h0M285 632h0M322 482h0M338 547h0M440 558h0M494 534h0M604 410h0M575 352h0M278 635h0M601 404h0M300 568h0M492 503h0M368 541h0M371 564h0M414 345h0M519 292h0M295 540h0M308 453h0M294 499h0M267 582h0M525 323h0M393 579h0M447 488h0M648 334h0M313 441h0M369 528h0M479 327h0M624 345h0M640 393h0M441 351h0M449 429h0M323 490h0M361 496h0M376 386h0M322 477h0M348 389h0M427 443h0M521 505h0M310 542h0M305 472h0M574 350h0M359 368h0M399 510h0M456 536h0M587 419h0M552 360h0M448 294h0" stroke="#ae1010" stroke-width="5.0" stroke-linecap="round"/>
<path d="M325 482h0M546 380h0M437 547h0M353 372h0M359 543h0M354 480h0M303 498h0M260 558h0M414 490h0M583 438h0M495 508h0M345 563h0M341 428h0M388 352h0M442 520h0M593 305h0M285 495h0M520 305h0M386 543h0M410 349h0M358 491h0M547 505h0M331 556h0M421 555h0M307 467h0M354 343h0M407 515h0M596 378h0M415 324h0M389 562h0M450 471h0M304 533h0M641 333h0M589 349h0M315 534h0M502 305h0M410 321h0M640 380h0M345 446h0M563 350h0M359 462h0M669 326h0M282 542h0M496 294h0M351 545h0M521 338h0M436 539h0M521 315h0M621 422h0M557 426h0M569 320h0M456 447h0M578 364h0M311 570h0M425 579h0M301 436h0M603 341h0M567 365h0M513 510h0M557 327h0M633 378h0M560 347h0M257 639h0M442 459h0M286 528h0M472 340h0M579 334h0M414 456h0M591 346h0M572 349h0M502 305h0M632 357h0M668 318h0M603 326h0M277 529h0M364 495h0M569 343h0M367 511h0M435 569h0M424 497h0M278 566h0M376 427h0M501 441h0M551 371h0M393 391h0M528 485h0M346 389h0M356 437h0M588 380h0M625 361h0M505 348h0M363 571h0M310 492h0M419 307h0M335 546h0M586 340h0M246 631h0M351 552h0" stroke="#ae1010" stroke-width="6" stroke-linecap="round"/>
<path d="M325 431h0M607 330h0M353 501h0M322 623h0M486 310h0M538 304h0M648 387h0M344 428h0M575 369h0M425 509h0M332 548h0M444 369h0M517 320h0M401 532h0M436 487h0M600 402h0M376 570h0M563 453h0M308 513h0M505 300h0M447 558h0M410 487h0M443 533h0M412 525h0M442 450h0M492 310h0M343 559h0M294 502h0M289 549h0M503 523h0M416 558h0M267 631h0M428 517h0M357 596h0M466 297h0M473 332h0M497 414h0M389 331h0M577 365h0M489 315h0M391 515h0M338 535h0M618 370h0M506 346h0M377 460h0M342 396h0M403 383h0M509 504h0M411 569h0M389 513h0M570 305h0M317 538h0M448 333h0M285 634h0M284 567h0M438 525h0M381 345h0M548 297h0M300 635h0M331 585h0M568 335h0M624 341h0M339 431h0M534 445h0M530 317h0M492 310h0M368 386h0M370 559h0M433 386h0M597 348h0M511 470h0M577 370h0M256 539h0M485 463h0M264 570h0M450 321h0M427 542h0M406 544h0M525 511h0M307 593h0M639 367h0M305 493h0M463 540h0M484 528h0M652 306h0M495 364h0M474 543h0M326 453h0M634 324h0M370 424h0M328 452h0M399 395h0M330 463h0M485 363h0M418 412h0M462 459h0M500 331h0M500 486h0M345 405h0M413 508h0M572 380h0M477 469h0M438 318h0M331 513h0M364 554h0M275 518h0M442 302h0M668 372h0M309 495h0M456 537h0M452 546h0M479 444h0M332 591h0" stroke="#820a0a" stroke-width="3.0" stroke-linecap="round"/>
<path d="M596 317h0M540 311h0M584 410h0M401 501h0M301 485h0M299 453h0M587 329h0M529 455h0M544 307h0M400 520h0M397 496h0M511 461h0M477 427h0M547 371h0M589 343h0M314 459h0M441 315h0M301 528h0M391 363h0M484 337h0M344 432h0M577 328h0M393 577h0M294 563h0M355 574h0M587 337h0M283 492h0M392 462h0M328 574h0M634 328h0M357 530h0M342 548h0M341 395h0M606 383h0M518 309h0M262 583h0M564 380h0M363 559h0M496 398h0M288 485h0M323 624h0M282 533h0M441 548h0M337 467h0M347 396h0M381 542h0M560 442h0M501 336h0M477 301h0M564 322h0M546 330h0M584 410h0M344 544h0M316 466h0M418 531h0M422 565h0M628 402h0M337 563h0M339 388h0M272 617h0M311 508h0M630 356h0M383 357h0M266 554h0M511 416h0M561 371h0M385 534h0M572 312h0M371 534h0M538 328h0M336 430h0M446 305h0M295 472h0M565 362h0M554 309h0M414 313h0M431 410h0M640 356h0M495 343h0M341 425h0M488 296h0M293 499h0M254 631h0M263 545h0M668 398h0M342 383h0M301 591h0M379 335h0M473 382h0M253 591h0M556 476h0M321 407h0M561 430h0M539 451h0M252 629h0M392 471h0M582 403h0M329 489h0" stroke="#980c0c" stroke-width="6" stroke-linecap="round"/>
<path d="M284 598h0M259 615h0M581 409h0M499 503h0M263 620h0M318 506h0M468 302h0M530 409h0M618 423h0M373 372h0M422 420h0M552 363h0M353 584h0M647 334h0M535 332h0M540 378h0M294 498h0M301 561h0M421 324h0M262 586h0M358 573h0M377 369h0M335 594h0M628 310h0M570 400h0M307 548h0M622 338h0M554 317h0M620 402h0M294 515h0M606 309h0M394 462h0M649 379h0M252 617h0M405 552h0M358 528h0M351 579h0M639 334h0M476 314h0M339 434h0M270 575h0M520 519h0M322 564h0M479 522h0M262 643h0M481 436h0M279 507h0M422 339h0M384 426h0M576 324h0M302 520h0M571 352h0M475 406h0M535 300h0M586 449h0M287 514h0M268 529h0M432 332h0M591 373h0M558 444h0M414 297h0M292 525h0M386 359h0M315 569h0M339 431h0M355 479h0M427 344h0M640 381h0M551 428h0M377 556h0M263 584h0M318 563h0M666 382h0M357 453h0M326 437h0M419 552h0M417 526h0M510 341h0M585 407h0M617 333h0M555 436h0M261 600h0M473 404h0M338 414h0M289 610h0M612 356h0M397 476h0" stroke="#c81616" stroke-width="6" stroke-linecap="round"/>
<path d="M439 500h0M312 472h0M272 635h0M447 400h0M475 337h0M615 415h0M373 360h0M563 432h0M535 499h0M667 355h0M398 394h0M507 339h0M326 451h0M287 488h0M442 467h0M410 406h0M411 387h0M565 408h0M351 411h0M418 495h0M263 573h0M591 355h0M608 340h0M487 302h0M508 336h0M336 422h0M455 459h0M556 378h0M458 469h0M406 482h0M381 591h0M612 345h0M345 463h0M496 344h0M356 423h0M606 351h0M476 513h0M547 345h0M285 616h0M462 313h0M293 571h0M568 347h0M572 446h0M448 331h0M267 618h0M380 537h0M330 457h0M551 447h0M356 369h0M440 412h0M371 510h0M299 614h0M442 517h0M384 483h0M566 312h0M328 470h0M362 447h0M428 422h0M479 419h0M504 310h0M282 540h0M621 367h0M320 598h0M297 535h0M374 343h0M356 544h0M263 621h0M391 480h0M602 307h0M447 437h0M535 477h0M407 515h0M422 458h0M539 491h0M337 401h0M291 463h0M251 650h0M523 303h0M464 394h0M531 325h0M394 560h0M283 650h0M312 552h0M244 592h0M605 338h0M391 442h0M496 505h0M442 402h0M363 481h0M475 296h0M323 559h0M612 314h0M461 553h0M398 539h0M299 487h0M631 317h0M283 577h0M290 552h0M651 318h0M511 321h0M648 365h0M284 611h0M534 311h0M318 573h0M558 434h0M381 529h0M394 508h0M327 427h0M523 363h0M337 542h0M454 339h0M459 540h0M316 519h0M343 471h0M495 389h0M339 511h0M610 402h0M359 387h0M616 337h0M231 652h0M310 517h0M594 364h0M304 462h0M632 366h0M343 453h0M527 436h0M449 317h0M336 455h0M633 339h0M554 415h0M379 349h0M410 447h0M298 534h0M415 375h0M408 339h0M395 551h0M651 312h0M409 538h0M412 575h0M370 552h0M370 456h0M590 338h0M417 392h0M429 511h0M528 392h0M430 310h0M437 478h0M545 333h0M290 595h0M642 361h0M342 457h0M256 597h0M554 334h0M310 505h0M377 504h0M430 334h0M370 432h0M447 448h0M638 385h0M290 604h0M342 501h0M498 322h0M665 366h0M383 547h0M588 319h0M579 314h0M368 535h0M662 330h0M292 538h0M309 596h0M569 314h0M653 349h0M267 631h0M329 479h0M449 513h0M378 354h0M403 511h0M528 388h0M304 517h0M538 462h0M581 431h0M375 568h0" stroke="#980c0c" stroke-width="4" stroke-linecap="round"/>
<path d="M462 443h0M464 316h0M569 425h0M606 338h0M515 512h0M630 347h0M458 333h0M577 439h0M598 365h0M556 458h0M653 400h0M263 615h0M257 565h0M434 567h0M549 438h0M461 521h0M613 384h0M604 341h0M639 401h0M471 511h0M507 474h0M482 446h0M356 576h0M479 381h0M295 495h0M331 480h0M322 577h0M494 448h0M429 468h0M427 330h0M612 377h0M487 385h0M393 355h0M623 332h0M275 596h0M622 327h0M659 401h0M382 331h0M304 477h0M534 363h0M607 404h0M437 504h0M404 559h0M579 377h0M507 457h0M318 618h0M517 321h0M323 435h0M306 575h0M629 369h0M666 390h0M588 385h0M435 420h0M437 537h0M393 463h0M542 461h0M583 421h0M287 602h0M286 511h0M458 376h0M349 383h0M453 434h0M408 336h0M426 526h0M411 571h0M329 600h0M422 322h0M483 521h0M403 420h0M444 328h0M416 513h0M316 484h0M427 395h0M563 358h0M590 427h0M583 436h0M415 424h0M294 505h0M525 317h0M432 346h0M641 397h0M564 407h0M604 334h0M260 617h0M452 325h0M335 494h0M457 455h0M491 521h0" stroke="#6a0808" stroke-width="2.4" stroke-linecap="round"/>
<path d="M277 557h0M568 379h0M296 557h0M576 451h0M293 507h0M570 443h0M588 383h0M353 389h0M563 297h0M263 596h0M382 528h0M534 343h0M279 529h0M575 335h0M496 315h0M349 512h0M561 415h0M267 565h0M320 461h0M319 538h0M487 313h0M485 368h0M546 456h0M666 393h0M635 318h0M568 363h0M390 437h0M508 396h0M492 480h0M281 615h0M526 355h0M542 381h0M443 537h0M382 559h0M348 560h0M530 378h0M360 414h0M496 493h0M353 375h0M284 499h0M342 445h0M564 345h0M439 338h0M565 382h0M557 479h0M599 413h0M565 356h0M495 513h0M578 422h0M383 535h0M295 541h0M312 600h0M361 555h0M408 357h0M446 357h0M387 353h0M540 510h0M669 378h0M313 574h0M361 380h0M490 344h0M305 517h0M407 445h0M573 371h0M353 401h0M613 366h0M370 404h0M414 547h0M357 505h0M356 455h0M317 541h0M304 527h0M534 471h0M368 524h0M299 625h0M624 381h0M378 463h0M560 459h0M332 404h0M577 459h0M342 462h0M354 566h0M527 346h0M328 443h0M287 594h0M507 321h0M454 309h0M285 518h0M441 354h0M665 340h0M377 355h0M538 385h0M352 558h0M457 531h0" stroke="#820a0a" stroke-width="6" stroke-linecap="round"/>
<path d="M618 303h0M565 344h0M294 563h0M566 398h0M526 312h0M266 624h0M425 419h0M291 607h0M419 456h0M576 467h0M513 331h0M394 539h0M441 530h0M611 362h0M285 614h0M475 314h0M315 582h0M487 409h0M529 314h0M583 406h0M458 501h0M366 456h0M306 623h0M269 649h0M392 564h0M426 513h0M315 422h0M329 503h0M266 607h0M399 386h0M522 309h0M324 542h0M391 535h0M465 304h0M593 329h0M536 478h0M397 472h0M352 445h0M453 540h0M415 396h0M456 541h0M352 501h0M401 497h0M429 535h0M598 399h0M428 408h0M531 317h0M330 536h0M400 320h0M308 633h0M405 520h0M484 398h0M298 530h0M432 371h0M502 447h0M587 351h0M553 468h0M584 347h0M259 598h0M402 565h0M404 365h0M260 608h0M397 515h0M613 347h0M590 416h0M289 551h0M339 460h0M411 393h0M337 563h0M466 526h0M350 543h0M322 534h0M279 589h0M314 457h0M438 514h0M590 389h0M557 407h0M306 555h0M368 523h0M432 369h0M390 569h0M296 602h0M537 485h0M575 361h0" stroke="#980c0c" stroke-width="5.0" stroke-linecap="round"/>
<path d="M351 430h0M300 522h0M613 386h0M401 497h0M324 582h0M240 646h0M571 386h0M459 541h0M662 339h0M447 461h0M583 361h0M659 398h0M268 630h0M352 492h0M538 334h0M536 296h0M411 319h0M351 568h0M496 325h0M288 579h0M253 631h0M307 518h0M380 557h0M318 543h0M412 360h0M271 641h0M330 430h0M276 545h0M362 432h0M411 367h0M663 358h0M507 410h0M425 494h0M309 512h0M638 348h0M276 522h0M281 585h0M298 462h0M330 483h0M385 589h0M495 314h0M373 483h0M433 372h0M609 317h0M321 413h0M346 532h0M385 361h0M607 349h0M344 432h0M558 415h0M616 401h0M556 300h0M343 500h0M469 467h0M303 483h0M650 339h0M493 303h0M591 388h0M489 526h0M361 382h0M264 643h0M358 390h0M318 421h0M264 632h0M376 441h0M329 447h0M531 466h0M368 388h0M449 489h0M444 521h0M540 400h0M383 483h0M509 420h0M569 343h0M299 451h0M437 521h0M445 464h0M321 528h0M526 331h0M648 322h0M494 307h0M479 482h0M563 481h0M534 403h0M508 502h0M418 321h0M323 524h0M365 577h0M315 431h0M437 483h0M491 311h0M272 568h0M297 565h0M323 504h0M395 362h0M344 575h0M288 523h0M501 504h0M313 493h0M567 371h0M584 370h0M570 310h0M649 393h0M543 416h0M322 471h0M569 441h0M651 363h0M338 484h0M494 431h0M548 363h0M322 399h0M290 532h0M455 398h0M654 313h0M578 361h0M249 629h0M290 513h0M518 390h0M350 565h0M464 469h0M367 553h0M283 530h0M381 387h0M460 531h0M293 569h0M342 419h0M347 455h0M426 539h0M348 420h0M405 550h0M310 473h0M414 375h0M398 502h0M591 413h0M477 475h0M664 372h0M342 459h0M586 437h0M654 337h0M629 396h0M492 436h0M308 543h0M523 352h0M265 549h0M487 345h0M574 447h0M615 420h0M470 470h0M605 376h0M410 538h0M255 541h0M625 355h0M444 504h0M462 326h0M410 471h0M536 297h0M343 510h0M364 461h0M381 530h0M367 432h0M500 532h0M660 332h0M311 467h0M652 352h0M596 355h0M661 365h0M402 326h0M359 388h0M659 329h0M349 485h0M348 579h0M592 416h0M545 391h0M627 333h0M282 621h0M333 563h0M384 353h0" stroke="#c81616" stroke-width="4" stroke-linecap="round"/>
<path d="M482 355h0M481 359h0M616 331h0M426 535h0M558 365h0M497 339h0M657 383h0M469 513h0M575 380h0M509 293h0M287 592h0M535 458h0M546 448h0M513 376h0M297 549h0M538 298h0M436 492h0M452 549h0M340 488h0M413 353h0M465 522h0M564 363h0M552 479h0M528 456h0M299 466h0M601 316h0M371 507h0M358 373h0M557 363h0M594 419h0M585 368h0M667 326h0M356 507h0M442 388h0M472 425h0M384 573h0M445 365h0M660 349h0M587 340h0M407 544h0M462 333h0M265 615h0M568 341h0M319 573h0M237 640h0M597 412h0M591 408h0M348 455h0M614 423h0M250 602h0M603 413h0M284 568h0M634 326h0M316 449h0M558 381h0M461 387h0M366 513h0M284 515h0M501 303h0M398 536h0M374 564h0M440 517h0M319 532h0M528 338h0M490 431h0M421 496h0M433 449h0M506 361h0M322 514h0M570 314h0M480 386h0M637 311h0M349 369h0M332 466h0M474 297h0M373 385h0M438 505h0M349 598h0M657 376h0M253 607h0M665 330h0M519 313h0M653 339h0M633 353h0M579 430h0M348 557h0M553 494h0M317 446h0M593 444h0M483 296h0M569 408h0M305 551h0M390 319h0M283 483h0M368 402h0M387 500h0M651 374h0M291 534h0M363 586h0M436 424h0M418 544h0M341 569h0M308 475h0M348 590h0M607 375h0M358 592h0" stroke="#ae1010" stroke-width="3.0" stroke-linecap="round"/>
<path d="M282 572h0M614 336h0M555 353h0M283 604h0M595 347h0M591 409h0M246 588h0M359 530h0M393 446h0M599 352h0M338 502h0M409 342h0M514 396h0M404 560h0M399 463h0M306 476h0M398 450h0M354 407h0M627 388h0M579 337h0M366 489h0M449 400h0M629 361h0M407 323h0M591 371h0M407 502h0M350 490h0M384 477h0M273 637h0M400 545h0M619 422h0M348 497h0M624 340h0M386 497h0M541 374h0M369 527h0M406 331h0M458 492h0M304 586h0M324 509h0M302 510h0M542 333h0M582 326h0M646 387h0M484 524h0M614 341h0M629 345h0M514 291h0M323 566h0M564 385h0M331 541h0M363 398h0M445 332h0M266 571h0M278 604h0M601 310h0M606 412h0M382 455h0M533 429h0M357 447h0M651 325h0M296 493h0M454 544h0M482 371h0M318 510h0M618 335h0M609 329h0M366 528h0M457 385h0M668 316h0M353 352h0M281 491h0M558 476h0M353 587h0M312 479h0M406 562h0M481 506h0M334 457h0M452 430h0M537 315h0M407 525h0M549 481h0M265 628h0M396 440h0M661 304h0M412 374h0" stroke="#980c0c" stroke-width="3.0" stroke-linecap="round"/>
<path d="M412 446h0M341 563h0M419 499h0M364 596h0M512 405h0M509 366h0M637 350h0M540 365h0M371 351h0M471 401h0M264 626h0M267 652h0M583 432h0M506 335h0M296 475h0M600 419h0M643 363h0M425 305h0M633 398h0M283 639h0M333 567h0M316 555h0M271 579h0M292 559h0M369 566h0M410 522h0M320 566h0M627 378h0M341 480h0M486 340h0M388 545h0M520 309h0M313 613h0M414 355h0M460 519h0M572 378h0M489 300h0M617 363h0M535 384h0M304 587h0M432 377h0M428 528h0M309 507h0M257 555h0M307 556h0M426 316h0M369 347h0M492 346h0M335 480h0M456 429h0M345 367h0M457 312h0M422 572h0M272 598h0M526 486h0M264 576h0M396 542h0M482 449h0M644 353h0M509 300h0M559 404h0M264 654h0M498 436h0M265 542h0M350 404h0M515 290h0M488 302h0M385 566h0M363 602h0M542 356h0M290 482h0M531 480h0M629 365h0M632 355h0M357 569h0M569 440h0M418 380h0M335 567h0M364 511h0M319 487h0M402 331h0M464 336h0M586 338h0M479 377h0M533 462h0M612 327h0" stroke="#6a0808" stroke-width="3.0" stroke-linecap="round"/>
<path d="M349 426h0M393 566h0M626 390h0M412 519h0M528 341h0M486 344h0M618 312h0M569 432h0M342 361h0M464 495h0M378 502h0M419 436h0M408 466h0M413 562h0M429 357h0M625 333h0M410 424h0M441 392h0M356 512h0M539 352h0M374 412h0M552 398h0M394 325h0M275 581h0M405 415h0M286 534h0M624 408h0M526 300h0M547 368h0M597 407h0M341 568h0M331 475h0M433 344h0M534 517h0M302 613h0M363 575h0M310 537h0M435 311h0M598 367h0M590 451h0M343 580h0M588 395h0M588 415h0M588 434h0M437 325h0M328 507h0M392 331h0M271 569h0M604 390h0M637 357h0M511 473h0M411 352h0M441 326h0M307 508h0M343 578h0M648 320h0M278 557h0M509 333h0M570 288h0M364 494h0M543 377h0M288 598h0M237 657h0M646 326h0M495 472h0M416 500h0M560 476h0M453 511h0M365 491h0M284 552h0M609 324h0M357 497h0M604 361h0M558 337h0M444 555h0M309 470h0M598 374h0M600 367h0M442 318h0M346 576h0M525 332h0M251 621h0M651 350h0M347 381h0M302 453h0M415 574h0M393 579h0M443 373h0M264 574h0" stroke="#6a0808" stroke-width="5.0" stroke-linecap="round"/>
<path d="M505 324h0M322 576h0M255 621h0M411 489h0M271 581h0M550 439h0M426 537h0M392 555h0M457 539h0M634 319h0M631 363h0M323 520h0M370 465h0M481 466h0M609 362h0M442 542h0M620 392h0M278 525h0M426 425h0M373 527h0M380 465h0M539 331h0M363 432h0M552 316h0M299 477h0M595 304h0M608 317h0M456 412h0M389 563h0M328 538h0M377 437h0M573 445h0M482 405h0M435 517h0M318 534h0M568 388h0M499 329h0M507 335h0M324 504h0M425 449h0M595 388h0M290 472h0M308 532h0M551 406h0M488 449h0M536 470h0M351 464h0M578 454h0M316 444h0M289 597h0M294 566h0M244 639h0M446 518h0M236 641h0M374 524h0M328 439h0M467 309h0M569 312h0M368 456h0M416 311h0M563 309h0M605 384h0M239 617h0M644 349h0M335 562h0M368 558h0M484 312h0M470 383h0M385 345h0M578 382h0M314 497h0M441 305h0M273 620h0M296 527h0M381 373h0M274 558h0M502 475h0M538 343h0M402 358h0M622 379h0M412 330h0M649 335h0M388 546h0M367 364h0M501 429h0M347 457h0M384 328h0M482 405h0M502 333h0M317 529h0M326 408h0M327 533h0M294 508h0M298 604h0M546 337h0M241 648h0" stroke="#520606" stroke-width="5.0" stroke-linecap="round"/>
<path d="M588 419h0M399 502h0M387 489h0M397 574h0M544 369h0M357 551h0M510 404h0M444 338h0M559 334h0M554 323h0M332 449h0M289 619h0M520 497h0M390 438h0M279 614h0M596 383h0M375 415h0M429 319h0M415 562h0M617 414h0M305 620h0M558 452h0M365 383h0M303 542h0M357 405h0M403 334h0M661 385h0M446 487h0M316 552h0M299 521h0M365 487h0M466 382h0M272 613h0M315 628h0M546 500h0M586 440h0M603 405h0M485 423h0M570 316h0M333 597h0M456 327h0M439 378h0M566 330h0M280 518h0M289 490h0M656 382h0M350 420h0M647 358h0M557 350h0M511 391h0M409 518h0M586 393h0M302 566h0M285 590h0M339 508h0M429 406h0M306 620h0M485 335h0M325 590h0M581 322h0M575 329h0M296 560h0M602 331h0M574 461h0M341 458h0M393 449h0M454 510h0M464 360h0M552 324h0M608 352h0M440 514h0M384 468h0M660 350h0M613 401h0M412 476h0M344 566h0M273 661h0M547 413h0M534 326h0M520 418h0M489 459h0M567 417h0M389 473h0M337 585h0M614 315h0M394 340h0M362 549h0M458 362h0M363 514h0M416 524h0M322 557h0M344 522h0M258 611h0M493 417h0M344 503h0M389 497h0M292 578h0M397 479h0M353 544h0M380 568h0M286 547h0M622 339h0M578 378h0M338 436h0M369 492h0M378 334h0" stroke="#3a0303" stroke-width="2.4" stroke-linecap="round"/>
<path d="M290 574h0M399 476h0M487 295h0M385 470h0M475 429h0M529 439h0M367 542h0M358 468h0M291 591h0M406 520h0M378 376h0M575 372h0M564 354h0M606 416h0M321 448h0M472 517h0M592 322h0M486 306h0M416 567h0M444 447h0M372 587h0M448 510h0M335 586h0M587 355h0M597 338h0M336 460h0M419 412h0M311 553h0M484 328h0M351 509h0M613 397h0M435 491h0M273 642h0M432 402h0M383 585h0M413 545h0M321 529h0M401 536h0M361 556h0M345 590h0M479 313h0M394 525h0M424 540h0M319 591h0M269 611h0M613 334h0M333 497h0M354 495h0M390 479h0M531 296h0M465 332h0M457 441h0M653 387h0M572 393h0M664 379h0M505 317h0M540 320h0M360 491h0M283 553h0M589 332h0M669 325h0M503 304h0M521 466h0M279 616h0M604 425h0M306 512h0M374 526h0M380 367h0M348 489h0M408 331h0M552 337h0M314 593h0M567 419h0M438 316h0M382 472h0M386 505h0M564 451h0M558 400h0M330 389h0M509 405h0M318 626h0M293 563h0M434 503h0M339 421h0M550 291h0M509 425h0M335 455h0M616 321h0M303 615h0M549 331h0M358 378h0M466 446h0M342 532h0M652 380h0M332 475h0M341 477h0M516 447h0M269 574h0M316 595h0M320 445h0M335 483h0M319 547h0M468 451h0M397 495h0M580 443h0M319 605h0M350 561h0M432 561h0M519 513h0M389 333h0M331 450h0M612 315h0M616 352h0M251 650h0M328 393h0M376 406h0M456 307h0M330 535h0M344 382h0M554 353h0M409 498h0M287 609h0M296 531h0M281 609h0M367 465h0M403 467h0M458 505h0M547 378h0M555 494h0M525 324h0M454 377h0M334 514h0M434 302h0M598 367h0M509 442h0M415 320h0M537 348h0M402 352h0M352 429h0M560 338h0M371 365h0M373 384h0M367 362h0M256 616h0M428 339h0M631 359h0M585 421h0M289 570h0M580 391h0M438 537h0M283 560h0M414 527h0M657 319h0M429 516h0M337 522h0M650 333h0M388 387h0M647 344h0M336 470h0M268 563h0M555 341h0M353 470h0M580 380h0M622 370h0M603 382h0M272 647h0M313 559h0M354 380h0M515 311h0M367 502h0M588 321h0M491 348h0M372 388h0M644 335h0M606 348h0M342 517h0M315 527h0M362 437h0M462 413h0M305 590h0M644 384h0M340 397h0M520 355h0M660 312h0M432 548h0M533 368h0M341 514h0M669 398h0M302 477h0M420 559h0M587 417h0M279 491h0M358 573h0M363 418h0M331 492h0M398 537h0M307 534h0M451 479h0M491 327h0M395 432h0M482 467h0M556 373h0M641 333h0" stroke="#3a0303" stroke-width="4" stroke-linecap="round"/>
<path d="M621 303h0M305 545h0M481 507h0M392 409h0M396 569h0M351 512h0M507 359h0M446 502h0M420 535h0M364 391h0M281 597h0M556 421h0M375 527h0M310 432h0M353 463h0M644 400h0M375 522h0M284 569h0M413 317h0M325 412h0M625 307h0M289 476h0M442 327h0M536 379h0M340 565h0M603 396h0M451 380h0M568 451h0M337 589h0M347 500h0M328 466h0M534 499h0M449 426h0M533 306h0M296 618h0M575 428h0M465 412h0M504 483h0M548 303h0M572 454h0M262 637h0M529 494h0M401 423h0M557 384h0M443 542h0M467 434h0M481 321h0M376 547h0M359 396h0M308 599h0M456 437h0M584 451h0M440 559h0M366 496h0M251 656h0M311 567h0M346 473h0M471 462h0M488 295h0M538 312h0M435 552h0M384 478h0M414 555h0M348 383h0M297 627h0M530 346h0M379 511h0M359 400h0M271 517h0M329 496h0M578 443h0M555 457h0M661 343h0M498 498h0M584 448h0M325 481h0M576 332h0M352 577h0M277 607h0M513 345h0M414 503h0M431 555h0M660 356h0M273 613h0M560 367h0M375 509h0M646 383h0M333 560h0M446 326h0M544 336h0M302 480h0M337 462h0M424 537h0M448 554h0" stroke="#c81616" stroke-width="2.4" stroke-linecap="round"/>
<path d="M493 287h0M558 341h0M309 515h0M344 414h0M329 467h0M520 306h0M531 511h0M506 300h0M590 415h0M340 496h0M371 530h0M447 564h0M343 595h0M557 327h0M608 392h0M368 428h0M273 563h0M325 559h0M247 638h0M460 543h0M298 519h0M465 309h0M549 474h0M468 317h0M483 382h0M510 512h0M601 338h0M472 401h0M330 461h0M471 445h0M265 597h0M302 490h0M493 394h0M406 537h0M369 523h0M573 302h0M592 400h0M351 521h0M399 489h0M562 351h0M378 574h0M435 514h0M368 481h0M454 489h0M308 502h0M278 562h0M344 450h0M413 414h0M425 516h0M452 542h0M496 443h0M479 342h0M335 505h0M309 589h0M368 417h0M619 313h0M405 455h0M280 555h0M279 604h0M536 489h0M372 384h0M253 650h0M616 368h0M602 395h0M541 322h0M387 545h0M561 411h0M653 324h0M317 596h0M435 437h0M403 528h0M653 357h0M458 302h0M354 524h0M596 320h0M407 335h0M607 405h0M274 638h0M412 535h0M452 323h0M606 334h0M384 470h0M558 501h0M397 584h0M307 533h0M500 380h0M475 518h0M331 540h0M453 542h0M382 393h0M376 422h0M388 343h0M580 336h0M489 521h0M409 568h0M474 341h0M573 447h0M372 560h0M617 309h0" stroke="#c81616" stroke-width="3.0" stroke-linecap="round"/>
<path d="M371 341h0M352 478h0M601 314h0M664 321h0M599 324h0M391 554h0M333 535h0M531 303h0M352 594h0M481 316h0M448 409h0M335 598h0M620 397h0M369 369h0M367 434h0M327 565h0M289 527h0M523 429h0M402 338h0M512 444h0M543 305h0M401 448h0M551 404h0M502 380h0M602 414h0M270 550h0M345 462h0M413 566h0M532 411h0M545 361h0M530 466h0M487 317h0M642 331h0M428 571h0M668 342h0M525 303h0M291 545h0M539 358h0M327 569h0M274 527h0M449 526h0M496 473h0M277 622h0M300 478h0M327 442h0M389 391h0M503 459h0M598 330h0M618 406h0M287 555h0M598 428h0M396 342h0M539 361h0M409 429h0M515 477h0M298 513h0M330 392h0M373 327h0M324 466h0M367 418h0M343 506h0M320 575h0M480 359h0M537 328h0M514 515h0M495 475h0M564 373h0M583 367h0M313 512h0M635 396h0M596 320h0M482 525h0M662 325h0M578 440h0M403 350h0M374 547h0M341 392h0M506 500h0M298 534h0M315 447h0M519 388h0M638 352h0M616 376h0M384 365h0M393 330h0M511 499h0M446 521h0M405 461h0M417 387h0M286 559h0M307 492h0M592 308h0M589 326h0M566 461h0M565 385h0M543 330h0M315 534h0M275 629h0M623 319h0M570 345h0M635 335h0M596 416h0" stroke="#520606" stroke-width="3.0" stroke-linecap="round"/>
<path d="M336 593h0M422 540h0M624 340h0M264 554h0M403 326h0M387 494h0M461 536h0M376 432h0M353 517h0M377 499h0M307 572h0M423 506h0M341 568h0M352 396h0M570 438h0M389 369h0M308 608h0M529 477h0M628 312h0M455 521h0M271 653h0M290 475h0M258 646h0M324 446h0M506 386h0M534 491h0M583 439h0M376 565h0M415 353h0M424 556h0M487 431h0M398 544h0M609 417h0M632 337h0M610 426h0M284 616h0M333 559h0M471 467h0M619 358h0M391 404h0M343 591h0M311 538h0M492 544h0M443 563h0M660 347h0M486 315h0M621 367h0M343 411h0M402 358h0M442 423h0M378 543h0M323 586h0M515 500h0M373 468h0M669 352h0M557 486h0M640 321h0M425 372h0M527 296h0M450 358h0M493 376h0M540 302h0M605 311h0M370 339h0M398 326h0M461 511h0M300 544h0M316 521h0M348 593h0M379 569h0M519 327h0M568 483h0M500 370h0M626 333h0M483 395h0M426 518h0M507 498h0M597 404h0M321 439h0M278 604h0M408 379h0M325 598h0M324 528h0M318 547h0M368 525h0M586 315h0M527 362h0M600 369h0M608 369h0M359 530h0M372 522h0M496 368h0M584 401h0M447 417h0M526 403h0M450 549h0M277 578h0M285 554h0M365 577h0M261 605h0M389 497h0M341 554h0M618 313h0" stroke="#520606" stroke-width="6" stroke-linecap="round"/>
<path d="M318 576h0M331 542h0M361 532h0M369 567h0M582 385h0M409 516h0M588 363h0M498 345h0M265 574h0M372 499h0M547 300h0M409 346h0M260 587h0M592 350h0M341 568h0M387 369h0M280 488h0M512 497h0M267 520h0M379 539h0M389 522h0M378 564h0M555 343h0M280 647h0M303 491h0M616 302h0M425 455h0M439 558h0M354 545h0M363 420h0M477 524h0M596 334h0M442 551h0M400 500h0M380 330h0M274 596h0M350 498h0M410 346h0M413 564h0M592 430h0M610 417h0M346 391h0M397 487h0M376 395h0M359 556h0M331 588h0M495 414h0M282 586h0M479 331h0M314 557h0M338 395h0M442 373h0M288 488h0M351 383h0M487 520h0M530 300h0M523 471h0M662 396h0M433 403h0M588 455h0M429 465h0M318 463h0M307 521h0M416 356h0M531 316h0M547 299h0M613 345h0M415 457h0M279 523h0M433 338h0M621 395h0M445 350h0M519 356h0M359 553h0M359 382h0M366 443h0M429 539h0M588 417h0M477 524h0M371 392h0M363 372h0M252 570h0M294 510h0M360 474h0M392 481h0M481 310h0M419 554h0M310 512h0M271 653h0M465 320h0M300 489h0M488 352h0" stroke="#3a0303" stroke-width="6" stroke-linecap="round"/>
<path d="M351 365h0M350 381h0M556 502h0M280 592h0M330 495h0M651 405h0M323 494h0M460 363h0M321 601h0M598 410h0M332 528h0M293 509h0M250 585h0M490 529h0M643 337h0M480 301h0M587 415h0M596 361h0M373 442h0M569 348h0M374 428h0M316 459h0M581 430h0M601 376h0M429 353h0M639 396h0M417 405h0M544 317h0M616 352h0M546 486h0M369 398h0M398 364h0M561 350h0M516 297h0M445 476h0M561 363h0M654 360h0M507 442h0M612 411h0M425 322h0M511 460h0M431 553h0M277 636h0M557 288h0M405 341h0M558 317h0M406 331h0M567 301h0M386 535h0M334 515h0M508 516h0M442 366h0M315 565h0M646 321h0M334 459h0M557 466h0M564 366h0M401 491h0M425 326h0M566 330h0M313 522h0M472 329h0M510 307h0M639 375h0M332 575h0M531 365h0M260 569h0M402 547h0M284 598h0M606 367h0M411 527h0M421 315h0M589 313h0M579 387h0M305 564h0M555 409h0M371 507h0M363 478h0M310 568h0M391 345h0M626 355h0M450 380h0M345 492h0M552 370h0M494 337h0M544 316h0M266 631h0M605 318h0M400 562h0M324 447h0M275 602h0M286 626h0M347 452h0M574 371h0M432 511h0M288 518h0M521 310h0M654 322h0M316 516h0M413 347h0M659 353h0" stroke="#6a0808" stroke-width="6" stroke-linecap="round"/>
<path d="M560 420h0M497 404h0M428 512h0M499 387h0M523 353h0M288 494h0M649 357h0M653 379h0M422 510h0M488 347h0M366 363h0M496 364h0M366 520h0M252 629h0M415 540h0M406 549h0M387 572h0M311 549h0M300 604h0M566 458h0M447 316h0M435 537h0M276 567h0M394 446h0M359 523h0M382 483h0M295 492h0M361 532h0M405 579h0M663 368h0M457 547h0M579 383h0M422 562h0M604 389h0M553 324h0M343 577h0M255 600h0M321 569h0M340 428h0M375 453h0M338 573h0M493 517h0M457 541h0M383 432h0M410 482h0M369 392h0M300 570h0M264 574h0M459 490h0M320 556h0M390 587h0M408 323h0M603 410h0M456 426h0M339 542h0M599 309h0M594 406h0M262 549h0M657 366h0M515 477h0M541 454h0M413 521h0M382 542h0M282 614h0M598 303h0M358 501h0M311 614h0M316 572h0M386 400h0M347 551h0M494 390h0M493 335h0M505 516h0M579 325h0M396 483h0M289 540h0M493 449h0M574 436h0M318 523h0M522 465h0M540 461h0M483 507h0M599 302h0M521 412h0M327 581h0M330 554h0M599 382h0M669 378h0" stroke="#3a0303" stroke-width="3.0" stroke-linecap="round"/>
<path d="M402 563h0M546 384h0M367 451h0M366 529h0M667 337h0M361 491h0M581 343h0M397 312h0M653 335h0M609 373h0M405 555h0M324 483h0M285 569h0M483 319h0M593 456h0M262 608h0M531 306h0M265 608h0M312 581h0M549 385h0M500 450h0M604 411h0M372 591h0M408 355h0M551 418h0M276 638h0M578 318h0M572 389h0M573 350h0M560 373h0M423 340h0M495 527h0M261 558h0M541 367h0M266 583h0M353 490h0M668 332h0M564 315h0M487 490h0M486 503h0M662 310h0M495 319h0M299 586h0M415 506h0M617 410h0M418 468h0M402 427h0M251 579h0M546 393h0M372 570h0M301 457h0M299 512h0M362 369h0M328 505h0M570 393h0M368 472h0M295 521h0M483 367h0M463 489h0M545 398h0M535 326h0M328 443h0M347 522h0M551 295h0M373 352h0M308 503h0M610 298h0M656 362h0M636 355h0M321 558h0M401 545h0M427 550h0M595 334h0M508 301h0M578 369h0M438 499h0M575 440h0M315 540h0M632 334h0M288 531h0M581 453h0M334 394h0M342 496h0M306 615h0M415 528h0M396 489h0M380 473h0M434 323h0M490 517h0M463 538h0M435 368h0M599 361h0M400 346h0M306 437h0M530 348h0M419 531h0M433 321h0M561 306h0M574 362h0" stroke="#3a0303" stroke-width="5.0" stroke-linecap="round"/>
<path d="M320 504h0M345 587h0M424 330h0M327 500h0M622 386h0M327 605h0M448 310h0M285 513h0M651 335h0M596 356h0M343 483h0M571 302h0M325 457h0M487 328h0M656 336h0M469 420h0M454 473h0M379 503h0M551 349h0M570 416h0M300 602h0M504 435h0M611 388h0M294 596h0M337 441h0M412 439h0M568 431h0M366 396h0M361 582h0M407 521h0M440 486h0M335 507h0M304 561h0M544 325h0M475 339h0M558 433h0M591 399h0M596 377h0M275 589h0M453 325h0M642 352h0M265 589h0M609 416h0M596 397h0M350 504h0M298 473h0M268 598h0M449 544h0M635 330h0M545 381h0M569 337h0M257 558h0M337 462h0M363 361h0M467 351h0M537 435h0M362 562h0M343 572h0M341 403h0M317 577h0M341 461h0M600 333h0M608 313h0M412 510h0M367 452h0M539 346h0M536 415h0M434 521h0M287 506h0M496 513h0M418 348h0M412 390h0M262 650h0M454 472h0M668 354h0M316 571h0M624 329h0M515 351h0M367 478h0M504 356h0M600 324h0M297 493h0M469 476h0M569 322h0M374 388h0M405 395h0M563 416h0M649 369h0M417 534h0M577 348h0M576 413h0M316 606h0M484 342h0M660 342h0M276 656h0M332 461h0" stroke="#820a0a" stroke-width="2.4" stroke-linecap="round"/>
<path d="M640 398h0M415 304h0M421 548h0M498 425h0M620 319h0M524 315h0M493 382h0M366 538h0M423 530h0M305 588h0M417 526h0M266 623h0M388 531h0M529 500h0M552 409h0M317 556h0M552 354h0M370 528h0M584 378h0M297 618h0M516 321h0M482 396h0M428 344h0M273 643h0M395 533h0M562 317h0M379 395h0M413 390h0M490 323h0M297 558h0M489 509h0M368 460h0M373 510h0M548 331h0M480 437h0M550 341h0M314 445h0M487 372h0M286 513h0M303 558h0M494 463h0M306 585h0M338 553h0M358 441h0M620 378h0M489 293h0M396 376h0M293 585h0M643 350h0M574 340h0M533 450h0M358 421h0M260 608h0M337 521h0M454 344h0M488 331h0M562 346h0M394 580h0M445 400h0M383 517h0M586 418h0M400 317h0M311 512h0M354 388h0M290 581h0M461 305h0M371 414h0M559 426h0M608 417h0M389 524h0M426 387h0M327 465h0M336 397h0M555 428h0M373 348h0M396 372h0M315 593h0M499 531h0M588 331h0M239 656h0M446 528h0M409 478h0M641 351h0M527 411h0M270 632h0M378 577h0M553 423h0M637 384h0M586 440h0M402 527h0M468 459h0M563 404h0M393 331h0M342 448h0M597 385h0M549 324h0" stroke="#820a0a" stroke-width="5.0" stroke-linecap="round"/>
<path d="M379 521h0M272 536h0M387 524h0M656 343h0M253 597h0M314 534h0M356 553h0M444 421h0M344 394h0M336 469h0M497 337h0M307 482h0M510 409h0M322 461h0M371 550h0M370 438h0M411 529h0M659 357h0M561 298h0M611 340h0M397 504h0M319 474h0M457 486h0M417 553h0M414 545h0M589 389h0M541 289h0M419 389h0M343 418h0M576 381h0M453 544h0M488 327h0M336 469h0M525 518h0M373 397h0M338 381h0M418 499h0M578 305h0M312 598h0M351 441h0M253 627h0M592 326h0M266 592h0M378 374h0M487 511h0M297 550h0M590 315h0M458 403h0M253 572h0M304 633h0M333 506h0M311 477h0M348 563h0M325 562h0M389 320h0M349 573h0M257 644h0M331 512h0M460 536h0M395 367h0M506 472h0M519 511h0M522 334h0M622 332h0M559 469h0M270 531h0M543 488h0M554 312h0M641 374h0M559 299h0M442 408h0M350 493h0M436 365h0M525 436h0M613 378h0M497 307h0M460 330h0M575 398h0M385 443h0M317 463h0M307 604h0M446 554h0M578 346h0M408 570h0M408 351h0M365 500h0M484 526h0M366 542h0M565 428h0M363 523h0M246 619h0M379 558h0M599 340h0M294 519h0M618 354h0M265 571h0M507 311h0M337 437h0M239 622h0M650 374h0M354 573h0M551 349h0M585 330h0M463 308h0M364 436h0" stroke="#980c0c" stroke-width="2.4" stroke-linecap="round"/>
<path d="M411 497h0M653 330h0M278 639h0M342 528h0M581 318h0M363 399h0M481 308h0M634 367h0M390 341h0M396 347h0M598 295h0M418 309h0M518 347h0M527 345h0M471 302h0M497 303h0M239 627h0M645 379h0M416 539h0M588 324h0M304 515h0M254 637h0M482 314h0M508 407h0M554 446h0M456 527h0M515 343h0M403 510h0M477 463h0M288 542h0M543 490h0M445 310h0M528 312h0M362 381h0M601 322h0M636 369h0M283 603h0M374 456h0M366 439h0M394 510h0M641 333h0M383 580h0M491 527h0M319 593h0M316 486h0M555 491h0M619 414h0M433 423h0M281 594h0M562 356h0M629 391h0M329 618h0M541 451h0M551 423h0M491 470h0M475 417h0M340 567h0M640 369h0M520 317h0M290 567h0M621 391h0M354 535h0M287 525h0M411 446h0M257 565h0M425 347h0M375 341h0M338 574h0M241 603h0M524 397h0M413 413h0M540 484h0M390 496h0M374 554h0M586 432h0M422 535h0M315 461h0M535 345h0M607 407h0M344 494h0M517 422h0M564 315h0M313 586h0M519 446h0M541 487h0M542 307h0M596 358h0M518 389h0M353 480h0M505 338h0M612 349h0M410 511h0" stroke="#520606" stroke-width="2.4" stroke-linecap="round"/>
<path d="M445 475h0M359 522h0M286 565h0M333 551h0M460 548h0M519 490h0M300 591h0M254 645h0M504 471h0M328 520h0M298 545h0M514 392h0M527 506h0M637 388h0M341 360h0M380 477h0M404 325h0M524 337h0M645 389h0M412 559h0M354 534h0M305 606h0M321 450h0M601 344h0M566 299h0M373 355h0M316 496h0M345 543h0M573 448h0M390 497h0M298 617h0M376 581h0M557 464h0M369 506h0M274 615h0M563 441h0M374 479h0M475 306h0M583 450h0M651 331h0M541 310h0M277 644h0M584 319h0M331 457h0M642 338h0M589 442h0M614 413h0M392 373h0M364 565h0M475 347h0M387 362h0M277 583h0M572 435h0M358 480h0M346 597h0M623 379h0M510 375h0M452 494h0M243 610h0M261 629h0M494 312h0M639 318h0M274 532h0M563 370h0M323 450h0M408 327h0M520 510h0M598 419h0M604 405h0M631 380h0M300 532h0M301 571h0M357 438h0M311 487h0M277 562h0M421 564h0M364 375h0M570 436h0M287 648h0M365 499h0M543 434h0M443 537h0M540 290h0M520 327h0M263 610h0M403 522h0M451 402h0M568 438h0M298 612h0M455 474h0M560 331h0M544 354h0M289 497h0M613 395h0M488 399h0" stroke="#c81616" stroke-width="5.0" stroke-linecap="round"/>
<path d="M492 335h0M361 600h0M436 309h0M504 332h0M556 433h0M294 523h0M315 604h0M320 500h0M287 520h0M353 530h0M451 538h0M408 548h0M569 329h0M653 355h0M503 488h0M320 483h0M252 621h0M457 445h0M494 310h0M584 327h0M368 578h0M591 323h0M663 337h0M442 460h0M486 320h0M580 322h0M662 366h0M567 434h0M312 600h0M346 379h0M559 350h0M642 352h0M451 555h0M278 655h0M466 504h0M352 573h0M501 297h0M404 368h0M392 487h0M597 353h0M498 351h0M328 554h0M378 381h0M463 382h0M590 401h0M314 467h0M538 431h0M342 525h0M522 344h0M661 366h0M494 519h0M537 391h0M276 581h0M268 508h0M360 559h0M342 406h0M657 375h0M495 543h0M436 554h0M569 447h0M612 413h0M332 509h0M377 541h0M383 531h0M596 296h0M572 397h0M440 310h0M498 309h0M548 479h0M443 545h0M336 498h0M357 389h0M278 612h0M373 383h0M320 552h0M557 454h0M299 465h0M619 345h0M617 306h0M267 586h0M514 451h0M415 316h0M435 506h0M398 555h0M292 515h0M516 501h0M578 316h0M352 412h0M566 414h0M610 340h0M429 333h0M247 627h0M546 326h0M630 317h0M360 575h0M469 368h0M534 385h0M536 308h0M554 392h0M591 445h0M496 310h0M556 414h0M652 336h0M349 497h0M379 486h0M534 310h0M335 467h0M625 358h0M360 434h0M354 429h0M307 545h0M295 524h0M411 560h0M327 395h0M344 394h0M549 490h0M414 507h0M536 368h0M331 589h0M492 413h0M289 522h0M291 527h0M463 538h0M616 338h0M337 401h0M391 533h0M504 491h0M609 433h0M550 474h0M626 323h0M372 417h0M326 593h0M305 468h0M496 518h0M551 302h0M370 368h0M376 513h0M563 297h0M590 343h0M288 541h0M554 420h0M501 436h0M444 555h0M479 331h0M443 550h0M406 509h0M592 378h0M307 599h0M487 391h0M464 443h0M326 490h0M262 597h0M293 606h0M329 438h0M452 343h0M638 328h0M289 603h0M397 567h0M284 569h0M476 366h0M248 625h0M349 535h0M394 434h0M386 391h0M596 402h0M601 382h0M346 469h0M637 401h0M495 388h0M422 534h0M383 481h0M650 339h0M430 328h0M582 324h0M391 340h0M513 459h0M574 355h0M639 334h0M312 555h0M570 477h0M450 306h0M364 360h0M486 443h0M653 367h0M424 492h0M450 538h0M465 399h0M546 408h0M329 442h0M589 387h0M258 588h0M248 580h0M320 561h0M495 334h0M577 384h0M453 473h0M546 486h0M319 511h0" stroke="#520606" stroke-width="4" stroke-linecap="round"/>
<path d="M314 519h0M383 583h0M333 389h0M458 518h0M372 457h0M543 446h0M516 420h0M478 333h0M446 329h0M563 448h0M302 576h0M663 315h0M615 315h0M556 402h0M395 361h0M377 589h0M565 443h0M562 379h0M555 314h0M408 526h0M351 433h0M444 354h0M522 371h0M497 445h0M272 549h0M557 457h0M450 511h0M588 418h0M356 385h0M598 333h0M583 325h0M278 605h0M364 372h0M658 349h0M389 525h0M309 432h0M324 556h0M387 357h0M355 507h0M470 446h0M501 317h0M384 359h0M280 583h0M546 455h0M338 459h0M537 331h0M368 528h0M530 433h0M655 379h0M304 519h0M581 330h0M291 537h0M376 562h0M269 557h0M314 559h0M545 463h0M577 300h0M316 530h0M309 441h0M598 383h0M511 424h0M365 396h0M396 557h0M491 420h0M539 376h0M356 542h0M604 317h0M540 370h0M281 622h0M391 518h0M390 405h0M313 533h0M492 343h0M542 433h0M566 380h0M434 360h0M326 471h0M568 375h0M325 564h0M350 438h0M580 448h0M354 471h0M396 354h0M501 300h0M310 569h0M496 286h0M416 433h0M423 314h0M292 513h0M454 518h0M601 378h0M268 545h0M346 583h0M552 345h0M275 497h0" stroke="#ae1010" stroke-width="2.4" stroke-linecap="round"/>
<path d="M423 524h0M459 538h0M348 506h0M369 511h0M586 419h0M323 520h0M480 325h0M317 599h0M293 466h0M606 331h0M555 363h0M321 547h0M495 376h0M308 431h0M500 320h0M561 427h0M417 360h0M379 395h0M345 472h0M409 553h0M483 310h0M620 385h0M453 295h0M282 623h0M563 411h0M330 543h0M341 434h0M483 327h0M534 431h0M377 569h0M322 455h0M324 552h0M302 578h0M409 498h0M586 326h0M257 559h0M476 525h0M594 340h0M421 467h0M572 365h0M658 319h0M427 547h0M492 310h0M553 392h0M279 619h0M317 550h0M426 480h0M446 335h0M395 574h0M330 488h0M474 341h0M380 364h0M375 526h0M583 313h0M576 452h0M342 512h0M654 383h0M337 424h0M575 304h0M390 351h0M331 574h0M451 409h0M494 336h0M395 444h0M372 523h0M429 394h0M448 517h0M582 313h0M354 599h0M287 545h0M531 376h0M484 335h0M320 574h0M324 588h0M337 530h0M424 396h0M612 333h0M401 326h0M365 528h0M290 556h0M547 331h0M436 524h0M273 596h0M359 499h0M644 310h0M531 389h0M345 521h0M343 537h0M428 553h0M585 406h0M310 561h0M273 615h0M354 369h0M601 377h0M304 471h0M616 379h0M322 503h0M650 313h0M459 529h0M384 497h0M467 429h0M258 595h0M572 371h0M618 325h0M294 573h0M410 542h0M409 460h0M485 486h0M501 320h0M551 294h0M339 458h0M424 530h0M552 298h0M387 345h0M659 350h0M311 479h0M462 290h0M376 498h0M376 342h0M640 326h0M381 342h0M323 451h0M597 318h0M341 534h0M396 518h0M518 405h0M433 373h0M630 339h0M495 537h0M276 553h0M606 306h0M303 507h0M603 419h0M345 509h0M588 371h0M293 570h0M337 478h0M515 472h0M401 394h0M558 288h0M292 598h0M512 489h0M599 421h0M570 368h0M535 321h0M411 538h0M242 648h0M314 433h0M557 393h0M311 573h0M259 602h0M353 402h0M478 321h0M610 358h0M411 573h0M472 525h0M572 433h0M285 526h0M594 343h0M556 360h0M611 327h0M558 487h0M323 574h0M569 329h0M636 391h0M254 603h0M552 453h0M331 472h0M249 578h0M596 345h0M607 376h0M555 478h0M359 518h0" stroke="#6a0808" stroke-width="4" stroke-linecap="round"/>
<path d="M340 460h0M343 453h0M338 470h0M338 476h0M340 467h0M343 476h0M342 473h0M338 477h0M341 496h0M348 482h0M349 470h0M335 482h0M332 496h0" stroke="#e01828" stroke-width="5.0" stroke-linecap="round"/>
<path d="M334 456h0M333 468h0M341 487h0M338 475h0M334 473h0M339 496h0M328 452h0M348 485h0M339 464h0M340 452h0M340 502h0M335 461h0" stroke="#e01828" stroke-width="3.0" stroke-linecap="round"/>
<path d="M337 475h0M339 491h0M344 478h0M344 475h0M343 488h0M335 484h0M345 481h0M340 459h0M346 482h0M346 474h0M336 471h0M340 466h0M345 458h0M339 486h0M340 483h0M335 475h0M345 478h0" stroke="#ff2030" stroke-width="4" stroke-linecap="round"/>
<path d="M342 491h0M339 480h0M340 488h0M332 493h0M343 476h0M343 489h0M350 485h0" stroke="#ff2030" stroke-width="5.0" stroke-linecap="round"/>
<path d="M330 482h0M337 476h0M347 512h0M338 477h0M343 481h0M341 479h0M344 473h0M339 496h0M342 484h0M343 477h0M335 467h0M340 473h0M333 473h0M344 492h0M339 469h0" stroke="#ff2030" stroke-width="3.0" stroke-linecap="round"/>
<path d="M333 476h0M339 476h0M347 471h0M335 472h0M345 476h0M341 457h0M331 474h0M341 464h0M343 473h0M338 472h0M339 489h0M339 487h0" stroke="#ff4050" stroke-width="5.0" stroke-linecap="round"/>
<path d="M342 464h0M343 479h0M341 471h0M333 486h0M335 475h0M343 486h0M341 459h0M338 491h0M335 476h0M337 473h0M334 480h0M337 461h0" stroke="#ff4050" stroke-width="3.0" stroke-linecap="round"/>
<path d="M341 476h0M341 466h0M342 473h0M343 492h0M336 466h0M342 482h0M339 480h0M347 490h0M327 480h0M336 506h0M330 472h0M332 483h0M340 454h0M337 482h0M348 460h0M344 463h0" stroke="#ff4050" stroke-width="4" stroke-linecap="round"/>
<path d="M346 504h0M342 478h0M343 496h0M341 485h0M335 481h0M334 492h0" stroke="#e01828" stroke-width="4" stroke-linecap="round"/>
</g>
<g filter="url(#bg2)" opacity="0.92">
 <ellipse cx="458" cy="425" rx="92" ry="76" fill="#48208a" transform="rotate(55 458 425)"/>
 <ellipse cx="430" cy="385" rx="40" ry="32" fill="#4a2ad0"/>
 <ellipse cx="500" cy="475" rx="42" ry="30" fill="#4a2ac8"/>
 <ellipse cx="460" cy="428" rx="62" ry="22" fill="#9a2a80" transform="rotate(-35 460 428)"/>
</g>
<g filter="url(#sb)" opacity="0.9">
<path d="M457 420h0M391 408h0M458 413h0M418 463h0M400 452h0M528 399h0M438 356h0M452 489h0M451 420h0M389 397h0M424 386h0M495 412h0M482 379h0M470 409h0M440 479h0M463 394h0M482 409h0M522 477h0M444 377h0M442 360h0M430 425h0M435 403h0M460 512h0M462 391h0M455 388h0" stroke="#9a80d8" stroke-width="3.0" stroke-linecap="round"/>
<path d="M390 417h0M415 459h0M475 425h0M491 395h0M484 471h0M396 409h0M502 392h0M497 455h0M448 486h0M515 386h0M492 395h0M510 446h0M483 383h0M432 374h0M427 393h0M488 399h0M448 399h0M415 388h0M456 406h0M483 425h0M505 434h0" stroke="#c03878" stroke-width="5.0" stroke-linecap="round"/>
<path d="M415 427h0M458 470h0M403 441h0M479 511h0M467 364h0M471 452h0M526 474h0M472 414h0M533 455h0M441 473h0M466 478h0M505 373h0M467 459h0M386 421h0M515 385h0M434 362h0M413 424h0M471 363h0M467 443h0M442 368h0M521 462h0M396 458h0M468 496h0M450 371h0M417 403h0" stroke="#6040d0" stroke-width="4" stroke-linecap="round"/>
<path d="M474 399h0M487 438h0M518 452h0M445 485h0M418 380h0M473 438h0M425 390h0M421 474h0M397 390h0M496 358h0M482 469h0M405 358h0M384 425h0M470 429h0M472 428h0M448 361h0M400 470h0M462 491h0M428 463h0M498 448h0" stroke="#a84098" stroke-width="2.4" stroke-linecap="round"/>
<path d="M502 390h0M480 370h0M490 432h0M411 443h0M496 414h0M455 423h0M403 444h0M490 463h0M454 393h0M505 476h0M511 489h0M460 411h0M464 414h0M468 463h0M442 365h0M521 436h0M511 418h0M383 405h0M418 410h0M478 398h0M433 492h0M498 504h0M437 393h0M470 373h0M442 456h0M496 383h0M474 493h0M508 442h0" stroke="#9048c0" stroke-width="4" stroke-linecap="round"/>
<path d="M483 360h0M505 424h0M440 482h0M418 400h0M451 448h0M486 444h0M483 384h0M495 403h0M469 363h0M389 427h0M465 382h0M437 404h0M463 387h0M418 445h0M412 429h0M385 389h0M489 430h0M487 470h0M404 454h0M480 427h0M495 425h0M464 493h0" stroke="#7048d8" stroke-width="5.0" stroke-linecap="round"/>
<path d="M444 420h0M471 421h0M429 467h0M416 411h0M422 450h0M392 414h0M439 423h0M473 496h0M416 466h0M522 399h0M447 496h0M404 355h0M479 384h0M425 479h0M470 437h0M491 496h0M475 487h0M466 412h0M409 424h0M461 480h0M527 472h0M467 473h0" stroke="#7048d8" stroke-width="3.0" stroke-linecap="round"/>
<path d="M431 454h0M464 411h0M464 508h0M496 422h0M529 456h0M485 420h0M489 414h0M372 385h0M499 381h0M462 472h0M410 425h0M534 444h0M406 409h0M504 411h0M467 496h0M493 463h0M512 492h0M430 445h0M489 403h0M477 397h0M534 418h0M532 424h0M426 388h0M408 352h0M472 444h0M464 476h0M449 459h0M427 460h0M400 399h0M464 394h0M478 483h0M463 453h0M508 407h0M511 463h0M403 449h0" stroke="#4030b0" stroke-width="2.4" stroke-linecap="round"/>
<path d="M451 417h0M389 403h0M434 374h0M434 376h0M420 465h0M456 445h0M435 452h0M492 480h0M457 430h0M534 454h0M436 454h0M413 426h0M425 435h0M465 399h0M434 473h0M472 410h0M451 481h0M443 414h0M497 380h0M450 485h0M463 494h0M435 464h0M496 409h0M454 363h0M501 391h0M472 486h0M476 406h0M448 458h0M443 399h0M475 372h0M451 486h0M437 381h0M467 407h0M488 450h0M491 508h0M388 392h0M520 490h0M497 457h0M507 464h0" stroke="#b03060" stroke-width="2.4" stroke-linecap="round"/>
<path d="M429 454h0M462 417h0M451 389h0M496 469h0M501 389h0M485 457h0M386 360h0M458 494h0M479 501h0M462 506h0M455 445h0M431 456h0M503 509h0M373 418h0M456 490h0M402 441h0M411 414h0M513 413h0M442 466h0M483 372h0M426 416h0M495 452h0M449 459h0M423 400h0M461 371h0M415 406h0M438 441h0M511 422h0M497 470h0M483 387h0M472 460h0M422 386h0M481 511h0M508 420h0" stroke="#b03060" stroke-width="3.0" stroke-linecap="round"/>
<path d="M440 448h0M500 415h0M483 519h0M414 393h0M498 431h0M503 465h0M503 486h0M431 453h0M439 496h0M476 462h0M506 455h0M410 384h0M487 417h0M446 395h0M509 403h0M453 418h0M468 355h0M418 434h0M404 410h0M460 406h0M493 432h0M393 448h0M463 499h0M446 397h0M477 397h0M504 508h0M460 387h0" stroke="#5038c8" stroke-width="3.0" stroke-linecap="round"/>
<path d="M483 393h0M527 470h0M398 374h0M415 450h0M397 414h0M460 463h0M477 495h0M458 460h0M495 491h0M486 450h0M471 482h0M512 390h0M478 516h0M422 446h0M439 464h0M528 469h0M460 360h0M501 489h0M438 426h0M466 469h0" stroke="#9a80d8" stroke-width="2.4" stroke-linecap="round"/>
<path d="M421 435h0M441 428h0M471 425h0M433 373h0M494 512h0M477 379h0M438 412h0M467 385h0M471 398h0M474 454h0M479 415h0M478 397h0M468 363h0M491 441h0M493 408h0M489 452h0M413 436h0M408 430h0M469 456h0M485 411h0M475 388h0M443 399h0M492 489h0M524 416h0M406 442h0" stroke="#6040d0" stroke-width="5.0" stroke-linecap="round"/>
<path d="M458 509h0M415 429h0M439 381h0M411 450h0M516 428h0M432 366h0M456 351h0M516 413h0M398 348h0M445 450h0M411 372h0M415 370h0M481 404h0M421 498h0M461 431h0M433 486h0M465 403h0M411 413h0M445 437h0M435 408h0M473 451h0" stroke="#9a80d8" stroke-width="4" stroke-linecap="round"/>
<path d="M420 423h0M499 473h0M488 419h0M453 369h0M372 407h0M448 390h0M439 405h0M398 352h0M465 357h0M381 399h0M439 407h0M430 414h0M498 398h0M510 393h0M435 507h0M387 362h0M446 451h0M484 375h0M483 446h0M514 467h0M507 443h0M401 367h0M411 394h0" stroke="#6040d0" stroke-width="2.4" stroke-linecap="round"/>
<path d="M468 462h0M418 399h0M433 498h0M526 465h0M440 418h0M418 345h0M434 452h0M439 415h0M526 433h0M491 425h0M399 362h0M421 353h0M452 395h0M438 470h0M381 367h0M533 475h0M478 457h0M491 437h0M426 485h0M391 386h0M425 428h0M471 370h0M461 469h0M454 414h0" stroke="#c03878" stroke-width="3.0" stroke-linecap="round"/>
<path d="M522 407h0M438 430h0M475 423h0M503 443h0M419 394h0M415 441h0M477 361h0M453 347h0M466 446h0M536 439h0M417 434h0M451 394h0M479 355h0M458 506h0M388 401h0M474 415h0M512 449h0M396 383h0M475 366h0M508 480h0M382 420h0M510 379h0M539 458h0M515 489h0M421 458h0M396 399h0M382 438h0M435 466h0M495 501h0M505 476h0M522 500h0M468 442h0M479 452h0M446 478h0M455 340h0M418 449h0M465 434h0M467 513h0M418 370h0M390 397h0M442 386h0M405 481h0M455 470h0" stroke="#b03060" stroke-width="5.0" stroke-linecap="round"/>
<path d="M448 452h0M414 426h0M479 458h0M503 415h0M510 402h0M426 385h0M470 407h0M458 414h0M431 415h0M481 435h0M521 474h0M519 440h0M432 490h0M406 454h0M406 401h0M433 423h0M429 408h0M458 401h0M399 379h0M461 379h0M476 512h0" stroke="#9a80d8" stroke-width="5.0" stroke-linecap="round"/>
<path d="M441 392h0M471 415h0M482 434h0M502 430h0M490 415h0M454 413h0M482 397h0M443 358h0M443 459h0M444 354h0M425 381h0M483 499h0M496 436h0M504 491h0M474 496h0M443 485h0M400 375h0M400 408h0M408 426h0M414 450h0M391 459h0M384 447h0M491 476h0M459 426h0M400 420h0M416 345h0M459 345h0M485 468h0M412 403h0M417 418h0M502 436h0M414 345h0" stroke="#a84098" stroke-width="4" stroke-linecap="round"/>
<path d="M472 453h0M475 363h0M445 407h0M468 421h0M488 387h0M406 396h0M531 461h0M498 387h0M412 374h0M517 414h0M422 373h0M427 475h0M385 387h0M444 443h0M422 335h0M447 372h0M468 449h0M417 476h0M465 360h0M490 440h0M464 440h0M419 394h0M405 384h0M416 354h0" stroke="#5038c8" stroke-width="5.0" stroke-linecap="round"/>
<path d="M454 411h0M444 372h0M453 420h0M399 411h0M406 426h0M488 452h0M384 387h0M395 397h0M424 372h0M474 354h0M468 430h0M381 441h0M381 377h0M438 472h0M433 426h0M417 409h0M402 370h0M490 455h0M442 389h0" stroke="#5038c8" stroke-width="2.4" stroke-linecap="round"/>
<path d="M456 414h0M513 459h0M386 374h0M442 401h0M447 447h0M484 347h0M517 441h0M404 474h0M467 499h0M455 397h0M454 436h0M471 365h0M447 401h0M463 369h0M413 458h0M530 495h0M505 503h0M514 400h0M447 383h0M404 466h0M452 413h0M410 385h0M421 408h0M501 449h0M417 366h0M449 469h0" stroke="#9048c0" stroke-width="5.0" stroke-linecap="round"/>
<path d="M467 410h0M484 394h0M480 436h0M408 380h0M441 471h0M520 423h0M499 395h0M521 408h0M416 410h0M488 437h0M478 373h0M486 400h0M499 380h0M433 433h0M444 452h0M370 402h0M463 474h0M441 351h0M507 427h0M539 452h0M469 416h0M466 413h0M506 399h0M517 396h0M527 446h0M386 427h0M422 474h0M474 395h0" stroke="#9048c0" stroke-width="2.4" stroke-linecap="round"/>
<path d="M399 360h0M446 476h0M487 418h0M427 436h0M432 413h0M490 451h0M445 465h0M511 483h0M385 455h0M492 405h0M464 444h0M470 439h0M390 414h0M503 460h0M467 503h0M415 405h0M477 498h0M403 454h0M412 339h0M422 347h0M426 446h0M441 467h0M462 430h0" stroke="#5038c8" stroke-width="4" stroke-linecap="round"/>
<path d="M457 404h0M432 365h0M445 501h0M398 462h0M541 450h0M424 384h0M462 401h0M428 373h0M477 472h0M423 379h0M379 401h0M457 429h0M504 419h0M409 467h0M473 365h0M433 416h0M461 340h0M419 456h0M408 444h0M443 467h0M437 441h0M481 393h0M439 362h0M406 360h0M506 480h0" stroke="#9048c0" stroke-width="3.0" stroke-linecap="round"/>
<path d="M419 375h0M506 453h0M502 411h0M416 425h0M497 482h0M391 456h0M420 386h0M491 437h0M434 381h0M417 367h0M395 365h0M440 452h0M495 486h0M490 413h0M464 448h0M457 459h0M406 442h0M440 406h0M501 503h0M418 440h0M436 397h0" stroke="#a84098" stroke-width="3.0" stroke-linecap="round"/>
<path d="M476 382h0M453 452h0M447 369h0M448 398h0M409 358h0M417 389h0M485 373h0M492 498h0M452 379h0M444 367h0M461 408h0M417 476h0M436 432h0M456 427h0M480 456h0M461 367h0M468 381h0M492 492h0M484 423h0M449 504h0M481 478h0M459 454h0M510 374h0M500 486h0M407 346h0" stroke="#4030b0" stroke-width="5.0" stroke-linecap="round"/>
<path d="M460 467h0M467 429h0M423 402h0M519 486h0M421 440h0M411 441h0M449 423h0M441 495h0M409 386h0M507 383h0M488 376h0M459 384h0M530 431h0M489 375h0M512 443h0M491 439h0M488 431h0M481 468h0M479 429h0M407 401h0M502 377h0" stroke="#7048d8" stroke-width="2.4" stroke-linecap="round"/>
<path d="M478 361h0M402 417h0M404 400h0M403 386h0M449 441h0M460 490h0M460 357h0M472 423h0M467 474h0M449 409h0M475 449h0M507 464h0M510 488h0M431 424h0M408 400h0M430 381h0M459 495h0M451 506h0M453 393h0M468 370h0M445 402h0" stroke="#4030b0" stroke-width="4" stroke-linecap="round"/>
<path d="M519 427h0M486 455h0M394 416h0M466 350h0M429 376h0M523 386h0M523 460h0M444 472h0M463 409h0M514 406h0M485 489h0M522 428h0M392 357h0M469 391h0M444 369h0M501 417h0M510 494h0M412 347h0M422 362h0M529 448h0M425 407h0M434 486h0M509 438h0M486 420h0M479 444h0M461 433h0M502 454h0" stroke="#c03878" stroke-width="4" stroke-linecap="round"/>
<path d="M436 470h0M494 363h0M451 380h0M465 457h0M512 420h0M510 446h0M426 359h0M426 465h0M447 485h0M425 354h0M417 405h0M492 437h0M495 468h0M459 420h0M453 424h0M509 420h0M472 432h0M385 411h0M462 407h0M430 357h0" stroke="#c03878" stroke-width="2.4" stroke-linecap="round"/>
<path d="M522 444h0M377 390h0M466 412h0M467 474h0M469 384h0M457 408h0M504 451h0M400 411h0M451 334h0M426 368h0M502 492h0M469 356h0M479 450h0M435 377h0M472 407h0M465 383h0M502 440h0M488 383h0M519 466h0M423 418h0" stroke="#b03060" stroke-width="4" stroke-linecap="round"/>
<path d="M526 466h0M520 447h0M395 428h0M385 426h0M435 439h0M423 371h0M388 453h0M448 359h0M450 419h0M501 444h0M423 363h0M462 486h0M517 423h0M490 450h0M519 480h0M482 451h0M521 457h0M430 467h0" stroke="#7048d8" stroke-width="4" stroke-linecap="round"/>
<path d="M412 475h0M450 415h0M485 410h0M451 457h0M520 491h0M420 375h0M435 445h0M420 398h0M455 452h0M470 350h0M429 487h0M453 395h0M445 373h0M453 415h0M493 381h0M456 472h0M493 399h0M483 455h0M396 413h0" stroke="#4030b0" stroke-width="3.0" stroke-linecap="round"/>
<path d="M464 374h0M446 457h0M398 429h0M454 482h0M439 428h0M394 411h0M490 397h0M511 413h0M477 361h0M389 401h0M434 380h0M476 459h0M449 402h0M449 441h0M414 379h0M481 374h0M435 412h0M446 488h0M419 440h0M489 399h0M476 439h0" stroke="#a84098" stroke-width="5.0" stroke-linecap="round"/>
<path d="M405 369h0M458 362h0M442 468h0M435 408h0M430 387h0M463 472h0M485 483h0M476 442h0M390 430h0M401 472h0M465 423h0M445 421h0M494 463h0M439 494h0M457 444h0M473 459h0" stroke="#6040d0" stroke-width="3.0" stroke-linecap="round"/>
</g>
<g filter="url(#bg3)" fill="none" stroke-linecap="round" opacity="0.45">
 <path d="M540,365 Q555,410 505,455" stroke="#3a8a10" stroke-width="12"/>
 <path d="M380,430 Q375,490 420,515" stroke="#3a8a10" stroke-width="14"/>
 <path d="M388,478 Q450,340 535,375" stroke="#2a6a10" stroke-width="5" opacity="0.6"/>
 <path d="M388,478 Q470,520 535,375" stroke="#2a6a10" stroke-width="5" opacity="0.6"/>
</g>
<g filter="url(#sb)" opacity="0.8">
<path d="M535 385h0M533 411h0M545 375h0M539 367h0M542 417h0M517 439h0M527 425h0M527 423h0M540 367h0M537 397h0M542 384h0M377 445h0M377 448h0M382 482h0M390 492h0M419 514h0M389 482h0M397 488h0M396 489h0M391 492h0M373 441h0M445 386h0M429 408h0M417 413h0M511 411h0M460 480h0M422 484h0M497 399h0M410 461h0M405 465h0" stroke="#3a9010" stroke-width="2.4" stroke-linecap="round"/>
<path d="M540 420h0M532 395h0M541 395h0M546 393h0M537 404h0M540 402h0M536 415h0M541 382h0M517 453h0M534 428h0M385 452h0M383 459h0M381 464h0M384 472h0M383 457h0M383 430h0M384 492h0M418 518h0M495 365h0M411 421h0M520 361h0M480 374h0M517 421h0M498 436h0M465 438h0M483 403h0M479 416h0M510 375h0" stroke="#88e040" stroke-width="2.4" stroke-linecap="round"/>
<path d="M544 370h0M522 447h0M542 421h0M524 433h0M510 449h0M532 388h0M539 368h0M526 423h0M534 368h0M405 492h0M392 469h0M405 494h0M387 483h0M383 444h0M399 503h0M397 492h0M414 524h0M425 509h0M418 516h0M386 474h0M376 463h0M431 420h0M418 436h0M470 377h0M424 410h0M402 453h0M478 363h0M440 403h0M459 378h0M439 408h0M490 372h0M524 367h0M427 420h0M453 489h0M493 438h0M521 392h0M524 399h0M466 477h0M472 474h0M536 389h0M493 438h0M514 397h0M518 396h0M467 422h0" stroke="#3a9010" stroke-width="4" stroke-linecap="round"/>
<path d="M547 367h0M537 409h0M516 443h0M532 437h0M544 386h0M537 409h0M517 437h0M540 371h0M539 410h0M537 407h0M527 434h0M527 425h0M543 374h0M531 423h0M524 430h0M413 508h0M404 501h0M393 479h0M402 500h0M392 495h0M371 451h0M400 487h0M369 427h0M374 458h0M393 496h0M404 509h0M406 499h0M383 462h0M401 509h0M459 384h0M402 458h0M507 369h0M501 366h0M438 400h0M453 467h0M439 481h0M390 483h0M492 412h0M484 425h0M454 420h0M474 421h0" stroke="#3a9010" stroke-width="3.0" stroke-linecap="round"/>
<path d="M537 400h0M542 400h0M525 431h0M540 399h0M525 440h0M546 372h0M549 393h0M531 438h0M540 390h0M537 402h0M543 388h0M384 472h0M417 512h0M387 493h0M379 472h0M380 434h0M378 483h0M382 480h0M374 447h0M403 501h0M387 485h0M441 388h0M437 377h0M469 375h0M488 460h0M392 471h0M506 425h0M529 377h0M405 476h0M391 453h0" stroke="#48a818" stroke-width="3.0" stroke-linecap="round"/>
<path d="M545 394h0M536 413h0M529 425h0M536 364h0M523 434h0M539 417h0M532 409h0M539 406h0M516 437h0M539 403h0M394 496h0M392 474h0M409 502h0M377 448h0M385 462h0M394 489h0M391 492h0M405 508h0M399 504h0M429 511h0M420 513h0M401 509h0M396 505h0M394 501h0M384 473h0M406 503h0M459 374h0M521 367h0M448 391h0M400 438h0M507 368h0M468 479h0M510 421h0M514 421h0M527 404h0M515 424h0M498 456h0M451 437h0M444 459h0M447 299h0M317 399h0M315 412h0M347 365h0M424 303h0M450 294h0" stroke="#a0c020" stroke-width="3.0" stroke-linecap="round"/>
<path d="M541 407h0M547 390h0M519 451h0M542 373h0M531 427h0M537 399h0M546 378h0M534 438h0M545 387h0M522 430h0M532 433h0M387 488h0M384 436h0M384 492h0M401 488h0M415 517h0M379 464h0M398 494h0M379 479h0M386 480h0M379 460h0M402 501h0M388 471h0M458 387h0M443 395h0M460 391h0M417 426h0M477 471h0M385 479h0M399 482h0" stroke="#48a818" stroke-width="4" stroke-linecap="round"/>
<path d="M545 388h0M538 406h0M523 435h0M529 442h0M539 394h0M519 447h0M521 431h0M533 430h0M522 433h0M541 379h0M539 410h0M537 355h0M399 500h0M386 486h0M409 501h0M380 440h0M408 497h0M402 492h0M380 470h0M408 507h0M381 467h0M394 477h0M377 437h0M377 430h0M399 494h0M374 442h0M422 401h0M445 388h0M526 377h0M453 394h0M453 475h0M459 479h0M517 383h0M470 469h0M400 455h0M407 462h0M540 373h0M436 465h0M442 437h0M389 491h0M427 444h0" stroke="#88e040" stroke-width="4" stroke-linecap="round"/>
<path d="M538 375h0M538 391h0M530 417h0M536 407h0M542 412h0M544 418h0M535 423h0M537 426h0M541 376h0M535 390h0M387 461h0M384 440h0M391 481h0M380 437h0M385 447h0M377 456h0M383 477h0M382 465h0M385 470h0M412 500h0M395 469h0M386 459h0M378 449h0M376 445h0M382 463h0M391 491h0M405 507h0M401 509h0M380 455h0M397 505h0M417 433h0M430 412h0M492 372h0M445 394h0M515 365h0M531 392h0M504 426h0M448 494h0M425 472h0M462 430h0M462 421h0M416 446h0M423 297h0M454 292h0M351 361h0M422 302h0" stroke="#a0c020" stroke-width="2.4" stroke-linecap="round"/>
<path d="M542 380h0M547 374h0M538 390h0M538 421h0M543 370h0M533 402h0M542 383h0M539 371h0M539 401h0M502 450h0M538 362h0M535 407h0M520 427h0M544 371h0M542 396h0M528 426h0M533 415h0M372 457h0M408 509h0M382 449h0M376 450h0M383 471h0M383 452h0M425 520h0M390 479h0M388 500h0M385 429h0M382 443h0M387 466h0M378 445h0M402 501h0M437 395h0M401 450h0M443 395h0M425 424h0M464 380h0M480 383h0M419 488h0M529 374h0M511 434h0M443 482h0M448 469h0M436 485h0M417 486h0M470 410h0" stroke="#70d828" stroke-width="2.4" stroke-linecap="round"/>
<path d="M540 401h0M540 401h0M534 358h0M545 389h0M539 409h0M376 440h0M411 506h0M381 445h0M411 519h0M406 512h0M378 476h0M390 500h0M406 500h0M385 485h0M408 509h0M419 509h0M442 397h0M406 457h0M440 422h0M433 411h0M465 377h0M415 414h0M530 398h0M525 392h0M414 489h0M505 399h0M533 371h0M405 468h0" stroke="#48a818" stroke-width="2.4" stroke-linecap="round"/>
<path d="M543 377h0M532 423h0M535 364h0M541 380h0M531 430h0M533 439h0M531 439h0M535 402h0M530 374h0M523 436h0M545 397h0M538 382h0M526 433h0M531 399h0M514 442h0M515 452h0M530 429h0M540 387h0M392 484h0M409 516h0M411 511h0M398 480h0M380 448h0M382 467h0M379 471h0M387 446h0M381 490h0M371 445h0M417 507h0M393 479h0M401 489h0M401 488h0M387 458h0M409 502h0M408 509h0M391 500h0M384 487h0M380 451h0M390 476h0M498 363h0M517 425h0M388 465h0M510 441h0M417 482h0M532 399h0M481 401h0M406 463h0M400 480h0" stroke="#58c020" stroke-width="2.4" stroke-linecap="round"/>
<path d="M540 363h0M528 420h0M531 422h0M541 378h0M541 383h0M538 377h0M536 400h0M533 373h0M537 393h0M515 449h0M389 480h0M404 503h0M389 482h0M421 515h0M388 460h0M420 522h0M396 492h0M414 516h0M408 509h0M418 514h0M384 429h0M376 437h0M392 492h0M373 442h0M416 447h0M423 431h0M398 478h0M515 401h0M406 482h0M554 375h0M477 403h0" stroke="#58c020" stroke-width="4" stroke-linecap="round"/>
<path d="M545 404h0M541 414h0M537 392h0M513 444h0M541 378h0M541 393h0M547 397h0M537 365h0M539 384h0M534 393h0M526 434h0M534 393h0M372 432h0M378 467h0M406 507h0M404 502h0M510 373h0M418 426h0M493 368h0M479 375h0M405 447h0M454 376h0M474 368h0M394 443h0M432 412h0M450 380h0M521 402h0M407 476h0M516 389h0M444 440h0M449 433h0M490 414h0" stroke="#88e040" stroke-width="3.0" stroke-linecap="round"/>
<path d="M538 388h0M514 439h0M543 410h0M539 410h0M535 385h0M536 387h0M525 432h0M542 402h0M540 381h0M412 498h0M383 436h0M399 476h0M382 472h0M402 496h0M381 459h0M377 478h0M391 457h0M379 462h0M392 478h0M407 511h0M456 375h0M454 395h0M448 386h0M396 457h0M407 446h0M385 477h0M449 472h0M531 401h0M529 411h0M515 376h0M458 436h0" stroke="#70d828" stroke-width="3.0" stroke-linecap="round"/>
<path d="M524 434h0M537 373h0M522 427h0M542 395h0M531 435h0M528 413h0M544 391h0M512 451h0M520 436h0M387 468h0M397 479h0M391 481h0M386 476h0M394 495h0M403 510h0M408 509h0M383 433h0M410 515h0M420 515h0M385 466h0M387 480h0M387 491h0M456 385h0M404 441h0M435 393h0M464 373h0M503 372h0M403 427h0M391 472h0M383 483h0M445 469h0M441 478h0M404 495h0M412 481h0M459 431h0M435 430h0M469 423h0" stroke="#70d828" stroke-width="4" stroke-linecap="round"/>
<path d="M538 392h0M523 440h0M534 398h0M513 449h0M532 427h0M543 375h0M538 380h0M545 410h0M543 401h0M521 437h0M390 451h0M387 493h0M399 497h0M379 438h0M386 437h0M408 524h0M405 508h0M400 483h0M377 459h0M399 476h0M394 470h0M382 468h0M380 452h0M384 467h0M454 373h0M430 411h0M404 441h0M476 466h0M449 487h0M486 460h0M479 445h0M391 464h0M467 432h0" stroke="#58c020" stroke-width="3.0" stroke-linecap="round"/>
<path d="M546 366h0M540 375h0M538 365h0M520 451h0M527 426h0M543 400h0M521 447h0M539 389h0M539 370h0M544 389h0M538 404h0M378 450h0M417 510h0M402 503h0M374 458h0M374 473h0M374 446h0M375 480h0M402 497h0M390 453h0M394 489h0M382 444h0M376 436h0M384 477h0M471 369h0M450 375h0M417 423h0M460 479h0M510 415h0M474 411h0M301 442h0M355 346h0M303 442h0M427 298h0" stroke="#a0c020" stroke-width="4" stroke-linecap="round"/>
<path d="M526 383h0M532 379h0M543 381h0M534 369h0M547 375h0M528 388h0M528 383h0M539 371h0M537 374h0M541 368h0M382 481h0M387 497h0M379 486h0M376 475h0M387 479h0M380 484h0M382 481h0M386 482h0M377 493h0M385 479h0M386 492h0" stroke="#d8c828" stroke-width="3.0" stroke-linecap="round"/>
<path d="M537 381h0M529 377h0M532 374h0M532 373h0M533 376h0M513 397h0M531 386h0M531 382h0M386 492h0M388 496h0M375 483h0M379 490h0M395 485h0" stroke="#a8b020" stroke-width="4" stroke-linecap="round"/>
<path d="M530 387h0M530 376h0M545 382h0M535 366h0M540 369h0M541 378h0M526 370h0M530 373h0M388 483h0M385 476h0M383 475h0M392 476h0M384 482h0" stroke="#d8c828" stroke-width="4" stroke-linecap="round"/>
<path d="M541 363h0M538 378h0M527 383h0M536 389h0M539 385h0M531 380h0M387 481h0M393 492h0M386 491h0M379 491h0M392 492h0M389 488h0M386 484h0M387 495h0M377 501h0" stroke="#c0b818" stroke-width="3.0" stroke-linecap="round"/>
<path d="M531 384h0M533 376h0M538 388h0M538 384h0M537 374h0M534 385h0M541 379h0M388 477h0M386 479h0M386 482h0M384 495h0M385 489h0" stroke="#a8b020" stroke-width="3.0" stroke-linecap="round"/>
<path d="M545 382h0M540 384h0M545 386h0M534 381h0M543 377h0M531 380h0M384 475h0M384 491h0M379 485h0M388 489h0M396 486h0M389 480h0M385 490h0M395 486h0M376 482h0M385 486h0" stroke="#c0b818" stroke-width="4" stroke-linecap="round"/>
<path d="M351 353h0M336 370h0M460 292h0M303 457h0M454 296h0" stroke="#40c018" stroke-width="3.0" stroke-linecap="round"/>
<path d="M298 457h0M322 404h0M304 434h0M339 376h0" stroke="#60d828" stroke-width="4" stroke-linecap="round"/>
<path d="M289 465h0M299 458h0M469 292h0M462 296h0M384 329h0" stroke="#40c018" stroke-width="2.4" stroke-linecap="round"/>
<path d="M388 321h0M328 386h0M339 363h0" stroke="#60d828" stroke-width="2.4" stroke-linecap="round"/>
<path d="M373 334h0M303 440h0M371 337h0M410 305h0M443 291h0M424 299h0" stroke="#40c018" stroke-width="4" stroke-linecap="round"/>
<path d="M309 427h0M308 435h0M356 341h0" stroke="#60d828" stroke-width="3.0" stroke-linecap="round"/>
<path d="M272 571h0M342 376h0M308 421h0M316 532h0M588 412h0M537 349h0M551 435h0M440 540h0M466 330h0M529 459h0M629 344h0M586 442h0M336 526h0M333 573h0M266 636h0M376 503h0M282 653h0" stroke="#208a10" stroke-width="3.0" stroke-linecap="round"/>
<path d="M547 325h0M368 473h0M584 297h0M586 360h0M626 305h0M443 296h0M518 453h0M251 555h0M390 547h0M471 318h0M479 444h0M453 359h0M349 390h0M395 499h0M494 341h0M319 444h0" stroke="#30a010" stroke-width="2.4" stroke-linecap="round"/>
<path d="M263 644h0M651 318h0M387 412h0M658 337h0M417 462h0M550 379h0M506 461h0M343 537h0M478 298h0M246 623h0M380 476h0M429 508h0M475 326h0M479 385h0M376 420h0" stroke="#208a10" stroke-width="2.4" stroke-linecap="round"/>
<path d="M454 422h0M337 589h0M254 658h0M281 617h0M594 340h0M490 324h0M567 324h0M656 340h0M314 537h0M635 356h0M481 383h0M303 529h0M394 492h0M593 329h0M443 378h0M515 466h0" stroke="#30a010" stroke-width="3.0" stroke-linecap="round"/>
<path d="M455 463h0M354 554h0M390 482h0M645 345h0M585 303h0M349 386h0M401 586h0M422 495h0M480 414h0M266 606h0M397 378h0M495 371h0M334 586h0M453 308h0M362 410h0M386 354h0M517 385h0" stroke="#40b018" stroke-width="3.0" stroke-linecap="round"/>
<path d="M416 480h0M387 589h0M616 409h0M587 431h0M455 299h0M476 301h0M465 339h0M652 357h0M553 437h0M369 548h0M385 484h0M341 553h0M452 407h0M422 341h0M373 591h0" stroke="#40b018" stroke-width="2.4" stroke-linecap="round"/>
</g>
</g>
<circle cx="462" cy="427" r="105" fill="none" stroke="#d4d4d4" stroke-width="1"/>
<line x1="319" y1="526" x2="569" y2="351" stroke="#2fa0e0" stroke-width="1.6"/>
<rect x="315.5" y="522.5" width="7" height="7" fill="#fff" stroke="#000" stroke-width="1"/>
<rect x="565.5" y="347.5" width="7" height="7" fill="#fff" stroke="#000" stroke-width="1"/>
<rect x="628" y="664" width="77" height="2" fill="#8c8c8c"/>
<text x="655" y="661" font-family="Liberation Sans" font-size="11" fill="#8c8c8c">5 µm</text>
</svg>
<!-- left strip -->
<div class="t" style="left:172px;top:163px;font-size:12px">Z</div>
<div class="a" style="left:172px;top:177px;width:0;height:0;border-left:5px solid transparent;border-right:5px solid transparent;border-bottom:10px solid #4a90e2"></div>
<div class="a" style="left:175px;top:198px;width:4px;height:424px;background:linear-gradient(90deg,#6a6a6a,#a8a8a8);border-radius:2px"></div>
<div class="a" style="left:169px;top:397px;width:16px;height:16px;border-radius:50%;background:radial-gradient(circle at 45% 35%,#e8f4ff,#5fa2e6 55%,#2c6fc0)"></div>
<div class="a" style="left:172px;top:631px;width:0;height:0;border-left:5px solid transparent;border-right:5px solid transparent;border-top:10px solid #4a90e2"></div>
<div class="a" style="left:170px;top:659px;width:0;height:0;border-top:8px solid transparent;border-bottom:8px solid transparent;border-left:14px solid #3d8ae0"></div>
<div class="a" style="left:139px;top:188px;width:17px;height:17px;border:2px solid #111;background:radial-gradient(circle at 50% 55%,rgba(255,255,255,0.9),rgba(255,255,255,0) 60%),linear-gradient(135deg,#ffb000,#ff40ff 50%,#20ff40 50.5%,#4040ff)"></div>
<svg class="a" style="left:126px;top:215px" width="60" height="280" viewBox="126 215 60 280">
 <path d="M141,233 L149,223 L152,226 L143,234 Z" fill="#cfe0f8" stroke="#6a8ad0" stroke-width="0.8"/>
 <circle cx="151.5" cy="222.5" r="3" fill="#30a040"/><path d="M148,224 L152,228" stroke="#208030" stroke-width="2.4"/>
 <circle cx="145" cy="395" r="5" fill="#cfe4f6" stroke="#6a9ac8" stroke-width="1.2"/><path d="M148.5,398.5 L154,404" stroke="#e0a030" stroke-width="2.6" stroke-linecap="round"/><path d="M138,400 h8 M142,396 v8" stroke="#2aa02a" stroke-width="2.4"/>
 <circle cx="145" cy="473" r="5" fill="#cfe4f6" stroke="#6a9ac8" stroke-width="1.2"/><path d="M148.5,476.5 L154,482" stroke="#e0a030" stroke-width="2.6" stroke-linecap="round"/><path d="M138,479 h8" stroke="#2aa02a" stroke-width="2.4"/>
</svg>
<div class="a" style="left:133px;top:246px;width:29px;height:29px;border:2px solid #b8b8b8;background:#0000c8"></div>
<div class="t" style="left:135px;top:254px;font-size:14px;color:#fff">457</div>
<div class="a" style="left:133px;top:287px;width:29px;height:29px;border:2px solid #b8b8b8;background:#00c000"></div>
<div class="t" style="left:135px;top:295px;font-size:14px;color:#000">528</div>
<div class="a" style="left:133px;top:327px;width:29px;height:29px;border:2px solid #b8b8b8;background:#c00000"></div>
<div class="t" style="left:135px;top:335px;font-size:14px;color:#000">617</div>
<div class="a" style="left:140px;top:368px;width:0;height:0;border-top:8px solid transparent;border-bottom:8px solid transparent;border-left:14px solid #3d8ae0"></div>
<div class="a" style="left:146px;top:415px;width:3px;height:44px;background:#555;border-radius:2px"></div>
<div class="a" style="left:140px;top:438px;width:15px;height:15px;border-radius:50%;background:radial-gradient(circle at 45% 35%,#e8f4ff,#5fa2e6 55%,#2c6fc0)"></div>
<!-- status -->
<div class="a" style="left:125px;top:679px;width:615px;height:31px;border:1px solid #c4c4c4;background:#ececec"></div>
<div class="a" style="left:129px;top:687px;width:16px;height:16px;border-radius:50%;background:radial-gradient(circle at 40% 35%,#7fb0ff,#1a4fd0 70%);border:1px solid #0a2a8a"></div>
<div class="t" style="left:136px;top:689px;font-size:12px;font-weight:bold;color:#fff;font-family:'Liberation Serif',serif">i</div>
<div class="t" style="left:157px;top:688px;font-size:14px;letter-spacing:0.4px">Z=36 (7.0µm)/70 T=1/1</div>
<div class="a" style="left:372px;top:688px;width:12px;height:12px;background:linear-gradient(135deg,#8f8fff,#3030e0);border:1px solid #1010a0"></div>
<div class="t" style="left:386px;top:688px;font-size:14px">10s</div>
<div class="a" style="left:409px;top:688px;width:12px;height:12px;background:linear-gradient(135deg,#b0ffb0,#30d030);border:1px solid #10a010"></div>
<div class="t" style="left:423px;top:688px;font-size:14px">1min38s</div>
<div class="a" style="left:477px;top:688px;width:12px;height:12px;background:linear-gradient(135deg,#ff9090,#e03030);border:1px solid #a01010"></div>
<div class="t" style="left:491px;top:688px;font-size:14px">3min53s</div>
<div class="t" style="left:681px;top:689px;font-size:13px">100%</div>



<!-- MEASUREMENT WINDOW -->
<div class="a" style="left:656px;top:191px;width:576px;height:431px;background:#ececec;box-shadow:0 22px 42px rgba(0,0,0,0.62),0 0 3px rgba(0,0,0,0.3);border-radius:5px 5px 0 0;overflow:hidden">
 <div class="a" style="left:0;top:0;width:576px;height:22px;background:linear-gradient(#ebebeb,#d5d5d5);border-bottom:1px solid #b4b4b4"></div>
</div>
<div class="tl" style="left:664px;top:196px;background:#8c8c8c;border-color:#7c7c7c"></div>
<div class="tl" style="left:684px;top:196px;background:#8c8c8c;border-color:#7c7c7c"></div>
<div class="tl" style="left:704px;top:196px;background:#8c8c8c;border-color:#7c7c7c"></div>
<div class="t" style="left:832px;top:196px;font-size:13.3px;color:#4d4d4d">[ID: 165854] P-TRE_15_R3D_D3D.dv</div>
<div class="a" style="left:750px;top:220px;width:30px;height:30px;background:#d9d9d9;border-radius:4px"></div>
<svg class="a" style="left:660px;top:220px" width="310" height="32" viewBox="660 220 310 32">
 <rect x="666" y="229" width="12" height="12" fill="#fff" stroke="#2a5ad0" stroke-width="1.6"/><path d="M668,232 h7 M668,235 h7" stroke="#6a8ad8" stroke-width="0.8"/>
 <path d="M670,238 L678,227 L680,229 L672,240 L669,241 Z" fill="#f0c020" stroke="#806010" stroke-width="0.6"/>
 <rect x="684" y="231" width="14" height="12" rx="1" fill="#4a7ae0" stroke="#2050b0" stroke-width="0.8"/><rect x="687" y="231" width="8" height="4" fill="#fff"/><rect x="688" y="238" width="6" height="5" fill="#d0e0ff"/>
 <path d="M684,229 Q688,223 694,226 L694,223.5 L698,227.5 L694,231 L694,228.5 Q689,227 686,230 Z" fill="#60c040" stroke="#2a8a20" stroke-width="0.5"/>
 <path d="M709,231 L718,241" stroke="#222" stroke-width="2" stroke-linecap="round"/>
 <path d="M708,225 L709.5,229 L713.5,229 L710.5,231.5 L711.5,235.5 L708,233 L704.5,235.5 L705.5,231.5 L702.5,229 L706.5,229 Z" fill="#ffd020" stroke="#e04010" stroke-width="0.8"/>
 <path d="M725,227 L737,241 M737,227 L725,241" stroke="#e01818" stroke-width="4" stroke-linecap="round"/>
 <path d="M725,227 L737,241 M737,227 L725,241" stroke="#ff5050" stroke-width="1.5" stroke-linecap="round"/>
 <path d="M761,229 L761,241 L763.5,238.5 L765.5,242.5 L767,241.8 L765,237.8 L768.5,237.5 Z" fill="#333"/>
 <rect x="794.5" y="229.5" width="11" height="11" fill="#fff" stroke="#111" stroke-width="1.8"/>
 <circle cx="830" cy="235" r="6" fill="#fff" stroke="#222" stroke-width="1.6"/>
 <circle cx="860" cy="235" r="6.5" fill="#111"/><path d="M860,230 V240 M855,235 H865" stroke="#fff" stroke-width="2.4"/><circle cx="860" cy="235" r="2" fill="#111"/>
 <path d="M885,229.5 L896,239.5" stroke="#222" stroke-width="1.6"/>
 <path d="M916,228.5 L920,234 L926,234 L926.5,241.5 L917,240.5 L914.5,236 Z" fill="#fff" stroke="#222" stroke-width="1.6" stroke-linejoin="round"/>
 <text x="945" y="240.5" font-family="Liberation Sans" font-size="11.5" fill="#222">A</text><path d="M955.5,229.5 V241" stroke="#222" stroke-width="1"/>
</svg>


<div class="a" style="left:981px;top:229px;width:14px;height:14px;border:1px solid #a8a8a8;border-radius:3px;background:#fff"></div>
<div class="t" style="left:1001px;top:229px;font-size:14px">Show Comment</div>
<!-- tab bar -->
<div class="a" style="left:665px;top:273px;width:558px;height:307px;background:#ececec;border:1px solid #dadada;border-radius:4px"></div>
<div class="a" style="left:667px;top:262px;width:553px;height:20px;background:#fff;border:1px solid #c4c4c4;border-radius:5px;overflow:hidden">
  <div class="a" style="left:24px;top:0;width:150px;height:19px;background:linear-gradient(#a3a3a3,#7f7f7f)"></div>
  <div class="a" style="left:338px;top:0;width:1px;height:19px;background:#d8d8d8"></div>
</div>
<div class="a" style="left:673px;top:266px;width:0;height:0;border-top:6px solid transparent;border-bottom:6px solid transparent;border-right:10px solid #000"></div>
<div class="t" style="left:742px;top:265px;font-size:14px;color:#f4f4f4">Graph Pane</div>
<div class="t" style="left:890px;top:265px;font-size:14px">Intensity View</div>
<div class="t" style="left:1056px;top:265px;font-size:14px;letter-spacing:0.05px">Intensity Results View</div>
<svg class="a" style="left:720px;top:263px" width="500" height="20" viewBox="720 263 500 20">
 <rect x="722.5" y="264.5" width="14" height="15" fill="#f4f4f4" stroke="#9a9a9a"/><path d="M729.5,265 V279 M723,272 H736" stroke="#c0c0c0" stroke-width="0.8"/><path d="M724,272 Q727,267 729.5,272 Q732,277 735,272" stroke="#e04040" stroke-width="1.1" fill="none"/>
 <rect x="870.5" y="265.5" width="14" height="14" fill="#f8f0f0" stroke="#a88"/><path d="M871,279 L884,266" stroke="#e8a040" stroke-width="2.5"/><rect x="874" y="271" width="6" height="6" fill="#c8d8f8" stroke="#80a0e0" stroke-width="0.6"/>
 <rect x="1037.5" y="265.5" width="14" height="14" fill="#f8f0f0" stroke="#a88"/><path d="M1038,279 L1051,266" stroke="#e8a040" stroke-width="2.5"/><rect x="1041" y="271" width="6" height="6" fill="#c8d8f8" stroke="#80a0e0" stroke-width="0.6"/>
</svg>
<!-- charts -->
<svg class="a" style="left:656px;top:285px" width="576" height="300" viewBox="656 285 576 300">
 <text x="847" y="303.4" font-family="Liberation Sans" font-weight="bold" font-size="15" letter-spacing="1.6">Line Profile</text>
 <rect x="736.2" y="310" width="381.3" height="77.2" fill="#fff" stroke="#b4b4b4" stroke-width="1"/>
 <g stroke="#d4d4d4" stroke-width="0.8" stroke-dasharray="2,2"><line x1="781.6" y1="310" x2="781.6" y2="387"/><line x1="827.0" y1="310" x2="827.0" y2="387"/><line x1="872.4000000000001" y1="310" x2="872.4000000000001" y2="387"/><line x1="917.8000000000001" y1="310" x2="917.8000000000001" y2="387"/><line x1="963.2" y1="310" x2="963.2" y2="387"/><line x1="1008.6000000000001" y1="310" x2="1008.6000000000001" y2="387"/><line x1="1054.0" y1="310" x2="1054.0" y2="387"/><line x1="1099.4" y1="310" x2="1099.4" y2="387"/><line x1="736" y1="329.3" x2="1117" y2="329.3"/><line x1="736" y1="348.6" x2="1117" y2="348.6"/><line x1="736" y1="367.9" x2="1117" y2="367.9"/></g>
 <g font-family="Liberation Sans" font-size="10" fill="#222" text-anchor="end" letter-spacing="0.6">
  <text x="730" y="314">8,000</text><text x="730" y="333.3">6,000</text><text x="730" y="352.6">4,000</text><text x="730" y="371.9">2,000</text><text x="730" y="391">0</text>
 </g>
 <g font-family="Liberation Sans" font-size="10" fill="#222" text-anchor="middle" letter-spacing="0.8">
  <text x="736.2" y="397.5">0</text><text x="781.6" y="397.5">50</text><text x="827.0" y="397.5">100</text><text x="872.4" y="397.5">150</text><text x="917.8" y="397.5">200</text><text x="963.2" y="397.5">250</text><text x="1008.6" y="397.5">300</text><text x="1054.0" y="397.5">350</text><text x="1099.4" y="397.5">400</text>
 </g>
 <text x="927" y="409.5" font-family="Liberation Sans" font-size="11" text-anchor="middle" letter-spacing="0.6">Points</text>
 <text transform="translate(695 349) rotate(-90)" font-family="Liberation Sans" font-size="11" text-anchor="middle" letter-spacing="-0.3">Intensity</text>
 <polyline points="736.2,385.7 737.1,385.6 738.0,386.1 738.9,386.4 739.8,386.5 740.7,386.0 741.6,386.4 742.6,386.5 743.5,385.8 744.4,385.8 745.3,385.6 746.2,386.2 747.1,385.8 748.0,385.8 748.9,386.3 749.8,385.4 750.7,385.5 751.6,384.7 752.5,385.5 753.5,385.6 754.4,385.0 755.3,385.3 756.2,385.0 757.1,385.5 758.0,385.2 758.9,384.9 759.8,384.8 760.7,384.8 761.6,385.0 762.5,384.2 763.4,384.1 764.3,383.7 765.3,383.6 766.2,383.1 767.1,383.3 768.0,383.0 768.9,382.6 769.8,383.0 770.7,382.5 771.6,382.7 772.5,381.9 773.4,382.9 774.3,382.8 775.2,382.9 776.2,383.4 777.1,384.1 778.0,383.3 778.9,384.0 779.8,383.7 780.7,384.6 781.6,384.5 782.5,383.9 783.4,383.9 784.3,385.0 785.2,385.1 786.1,384.6 787.0,384.4 788.0,384.6 788.9,384.7 789.8,385.2 790.7,384.7 791.6,384.5 792.5,385.2 793.4,385.6 794.3,385.4 795.2,384.9 796.1,385.9 797.0,385.3 797.9,385.7 798.9,385.5 799.8,385.6 800.7,385.5 801.6,384.9 802.5,385.3 803.4,384.9 804.3,385.5 805.2,385.6 806.1,385.3 807.0,386.6 807.9,385.5 808.8,385.4 809.7,385.9 810.7,385.3 811.6,385.7 812.5,386.4 813.4,385.5 814.3,385.8 815.2,385.7 816.1,385.5 817.0,385.0 817.9,385.4 818.8,385.5 819.7,385.3 820.6,386.2 821.6,385.0 822.5,385.9 823.4,385.3 824.3,385.9 825.2,385.8 826.1,385.6 827.0,384.7 827.9,385.2 828.8,385.7 829.7,385.6 830.6,385.9 831.5,385.5 832.4,385.7 833.4,385.2 834.3,386.0 835.2,385.6 836.1,385.8 837.0,385.7 837.9,385.2 838.8,385.4 839.7,385.2 840.6,385.0 841.5,385.0 842.4,386.0 843.3,385.3 844.3,386.1 845.2,385.5 846.1,384.7 847.0,385.5 847.9,385.5 848.8,385.2 849.7,385.3 850.6,385.2 851.5,385.5 852.4,384.7 853.3,384.8 854.2,385.2 855.1,384.9 856.1,384.7 857.0,384.6 857.9,384.8 858.8,384.6 859.7,384.9 860.6,385.2 861.5,385.0 862.4,384.3 863.3,384.3 864.2,384.6 865.1,384.8 866.0,384.5 867.0,383.9 867.9,384.0 868.8,384.7 869.7,384.4 870.6,384.9 871.5,384.8 872.4,384.2 873.3,384.2 874.2,383.7 875.1,383.5 876.0,383.5 876.9,383.2 877.8,383.8 878.8,383.9 879.7,383.2 880.6,382.2 881.5,383.0 882.4,383.5 883.3,382.8 884.2,382.2 885.1,383.1 886.0,382.3 886.9,382.7 887.8,381.8 888.7,381.9 889.7,382.0 890.6,381.2 891.5,382.0 892.4,382.0 893.3,380.9 894.2,381.9 895.1,380.6 896.0,381.0 896.9,381.0 897.8,380.3 898.7,379.8 899.6,379.4 900.5,379.2 901.5,378.3 902.4,379.2 903.3,378.2 904.2,377.7 905.1,375.9 906.0,376.4 906.9,374.8 907.8,374.1 908.7,373.0 909.6,372.0 910.5,371.6 911.4,370.7 912.4,371.0 913.3,370.2 914.2,369.4 915.1,369.0 916.0,369.0 916.9,367.9 917.8,368.3 918.7,367.1 919.6,367.6 920.5,367.6 921.4,367.3 922.3,366.9 923.2,366.5 924.2,367.1 925.1,367.0 926.0,366.5 926.9,366.9 927.8,367.1 928.7,366.0 929.6,366.4 930.5,365.7 931.4,366.4 932.3,366.9 933.2,365.5 934.1,365.3 935.1,364.6 936.0,364.8 936.9,364.7 937.8,364.4 938.7,364.6 939.6,364.2 940.5,364.6 941.4,364.2 942.3,365.1 943.2,365.4 944.1,365.3 945.0,365.6 945.9,366.7 946.9,366.0 947.8,367.4 948.7,367.2 949.6,367.5 950.5,368.1 951.4,368.4 952.3,368.1 953.2,368.7 954.1,369.2 955.0,370.3 955.9,370.2 956.8,369.8 957.8,370.4 958.7,371.2 959.6,371.3 960.5,371.4 961.4,371.3 962.3,371.7 963.2,371.7 964.1,372.7 965.0,372.2 965.9,373.0 966.8,373.2 967.7,372.7 968.6,373.6 969.6,373.9 970.5,374.2 971.4,374.5 972.3,374.1 973.2,374.3 974.1,374.8 975.0,375.2 975.9,375.0 976.8,375.6 977.7,375.6 978.6,375.9 979.5,376.2 980.5,375.8 981.4,375.9 982.3,376.3 983.2,377.7 984.1,376.5 985.0,377.1 985.9,377.7 986.8,377.8 987.7,377.5 988.6,377.7 989.5,378.0 990.4,378.5 991.3,378.6 992.3,378.5 993.2,379.0 994.1,379.4 995.0,379.5 995.9,379.4 996.8,379.4 997.7,378.8 998.6,380.3 999.5,379.8 1000.4,380.1 1001.3,380.1 1002.2,379.9 1003.2,380.1 1004.1,380.7 1005.0,381.0 1005.9,381.5 1006.8,381.1 1007.7,380.8 1008.6,381.5 1009.5,381.2 1010.4,381.3 1011.3,381.5 1012.2,381.4 1013.1,381.9 1014.0,382.3 1015.0,382.5 1015.9,381.8 1016.8,382.4 1017.7,382.5 1018.6,382.1 1019.5,382.9 1020.4,382.0 1021.3,382.5 1022.2,383.1 1023.1,383.2 1024.0,382.6 1024.9,383.6 1025.9,383.5 1026.8,383.3 1027.7,383.4 1028.6,383.5 1029.5,383.5 1030.4,383.9 1031.3,383.9 1032.2,383.4 1033.1,383.8 1034.0,384.3 1034.9,383.5 1035.8,385.1 1036.7,384.3 1037.7,384.1 1038.6,384.0 1039.5,384.4 1040.4,384.6 1041.3,384.3 1042.2,384.6 1043.1,384.4 1044.0,385.7 1044.9,384.4 1045.8,384.9 1046.7,384.3 1047.6,384.4 1048.6,384.4 1049.5,384.9 1050.4,384.6 1051.3,384.9 1052.2,384.7 1053.1,384.9 1054.0,385.2 1054.9,384.1 1055.8,384.7 1056.7,385.8 1057.6,384.7 1058.5,385.6 1059.4,385.1 1060.4,385.3 1061.3,385.3 1062.2,385.1 1063.1,385.3 1064.0,385.8 1064.9,385.2 1065.8,385.1 1066.7,384.6 1067.6,385.5 1068.5,385.8 1069.4,385.5 1070.3,385.2 1071.3,385.8 1072.2,385.7 1073.1,385.3 1074.0,385.6 1074.9,385.5 1075.8,385.9 1076.7,386.0 1077.6,385.8 1078.5,385.8 1079.4,385.9 1080.3,385.7 1081.2,385.7 1082.1,385.7 1083.1,385.8 1084.0,386.3 1084.9,386.5 1085.8,385.8 1086.7,386.1 1087.6,386.1 1088.5,386.7 1089.4,386.3 1090.3,386.5 1091.2,386.7 1092.1,386.6 1093.0,387.0 1094.0,386.4 1094.9,386.1 1095.8,386.8 1096.7,386.6 1097.6,387.1 1098.5,386.4 1099.4,386.0" fill="none" stroke="#0000ff" stroke-width="1.2"/>
 <polyline points="736.2,381.4 737.1,385.8 738.0,384.3 738.9,384.6 739.8,383.7 740.7,386.9 741.6,385.5 742.6,386.0 743.5,386.5 744.4,386.2 745.3,385.8 746.2,385.5 747.1,386.4 748.0,384.5 748.9,385.9 749.8,387.2 750.7,383.4 751.6,385.8 752.5,386.3 753.5,384.9 754.4,384.9 755.3,385.1 756.2,386.4 757.1,384.8 758.0,387.2 758.9,382.9 759.8,386.7 760.7,385.1 761.6,384.7 762.5,384.4 763.4,385.0 764.3,383.9 765.3,387.2 766.2,384.8 767.1,384.8 768.0,385.1 768.9,380.6 769.8,382.6 770.7,379.7 771.6,380.9 772.5,375.9 773.4,379.5 774.3,380.4 775.2,375.6 776.2,378.9 777.1,380.8 778.0,381.4 778.9,384.7 779.8,384.3 780.7,382.3 781.6,386.2 782.5,382.9 783.4,386.1 784.3,381.7 785.2,381.8 786.1,375.9 787.0,375.3 788.0,378.2 788.9,380.8 789.8,379.9 790.7,379.4 791.6,381.5 792.5,380.2 793.4,379.3 794.3,380.9 795.2,381.5 796.1,379.8 797.0,381.4 797.9,379.8 798.9,381.6 799.8,378.9 800.7,381.7 801.6,382.9 802.5,381.3 803.4,382.5 804.3,383.0 805.2,381.2 806.1,379.3 807.0,383.0 807.9,379.3 808.8,378.9 809.7,378.3 810.7,376.4 811.6,378.9 812.5,375.4 813.4,376.1 814.3,375.6 815.2,376.1 816.1,376.3 817.0,376.6 817.9,375.2 818.8,372.7 819.7,374.2 820.6,372.0 821.6,369.9 822.5,369.0 823.4,364.9 824.3,360.2 825.2,366.3 826.1,364.4 827.0,365.3 827.9,367.6 828.8,366.3 829.7,364.8 830.6,363.0 831.5,363.8 832.4,362.7 833.4,365.9 834.3,366.5 835.2,368.7 836.1,369.8 837.0,372.2 837.9,371.8 838.8,369.4 839.7,370.4 840.6,368.5 841.5,366.6 842.4,366.1 843.3,363.5 844.3,363.1 845.2,363.9 846.1,364.3 847.0,362.3 847.9,363.0 848.8,362.9 849.7,364.7 850.6,365.3 851.5,368.5 852.4,364.8 853.3,368.7 854.2,366.4 855.1,370.1 856.1,369.9 857.0,369.2 857.9,370.5 858.8,371.4 859.7,369.5 860.6,370.3 861.5,371.2 862.4,372.8 863.3,374.0 864.2,373.7 865.1,373.9 866.0,373.4 867.0,372.4 867.9,374.0 868.8,375.1 869.7,375.0 870.6,372.4 871.5,374.3 872.4,374.3 873.3,374.3 874.2,373.9 875.1,374.7 876.0,373.2 876.9,373.8 877.8,379.2 878.8,375.3 879.7,370.9 880.6,377.1 881.5,375.1 882.4,373.8 883.3,375.4 884.2,373.6 885.1,377.4 886.0,377.4 886.9,375.7 887.8,376.3 888.7,376.6 889.7,374.0 890.6,374.3 891.5,374.5 892.4,374.9 893.3,373.7 894.2,374.1 895.1,374.8 896.0,372.8 896.9,372.8 897.8,373.0 898.7,371.9 899.6,374.3 900.5,373.1 901.5,373.8 902.4,371.2 903.3,372.6 904.2,370.4 905.1,371.3 906.0,374.3 906.9,375.5 907.8,373.3 908.7,374.6 909.6,374.5 910.5,376.0 911.4,373.7 912.4,374.5 913.3,374.3 914.2,374.6 915.1,376.5 916.0,378.6 916.9,375.9 917.8,376.5 918.7,376.5 919.6,374.4 920.5,376.1 921.4,373.8 922.3,375.8 923.2,375.2 924.2,375.6 925.1,375.2 926.0,378.3 926.9,375.0 927.8,376.5 928.7,378.2 929.6,376.0 930.5,376.5 931.4,375.2 932.3,376.1 933.2,376.7 934.1,379.7 935.1,375.0 936.0,375.4 936.9,376.5 937.8,377.0 938.7,375.9 939.6,379.0 940.5,376.8 941.4,377.8 942.3,379.3 943.2,377.4 944.1,377.5 945.0,375.6 945.9,376.7 946.9,380.4 947.8,381.0 948.7,378.3 949.6,378.6 950.5,379.7 951.4,380.5 952.3,378.7 953.2,380.1 954.1,379.5 955.0,375.1 955.9,373.8 956.8,373.1 957.8,371.5 958.7,370.9 959.6,368.9 960.5,373.0 961.4,370.5 962.3,375.0 963.2,375.0 964.1,373.7 965.0,375.9 965.9,374.7 966.8,376.8 967.7,373.9 968.6,373.3 969.6,375.9 970.5,374.8 971.4,375.7 972.3,378.3 973.2,371.2 974.1,374.3 975.0,374.1 975.9,374.8 976.8,375.1 977.7,372.0 978.6,378.1 979.5,376.0 980.5,376.2 981.4,375.9 982.3,374.6 983.2,376.6 984.1,377.4 985.0,377.1 985.9,374.7 986.8,374.0 987.7,374.1 988.6,372.9 989.5,375.9 990.4,373.7 991.3,374.1 992.3,375.3 993.2,376.1 994.1,373.7 995.0,375.9 995.9,375.3 996.8,376.2 997.7,372.2 998.6,374.8 999.5,375.4 1000.4,375.0 1001.3,374.9 1002.2,374.4 1003.2,376.9 1004.1,376.1 1005.0,373.6 1005.9,372.8 1006.8,375.7 1007.7,374.1 1008.6,375.0 1009.5,377.5 1010.4,374.7 1011.3,375.9 1012.2,373.1 1013.1,374.7 1014.0,374.5 1015.0,376.6 1015.9,374.4 1016.8,377.4 1017.7,374.3 1018.6,372.7 1019.5,376.5 1020.4,373.6 1021.3,372.8 1022.2,375.2 1023.1,373.3 1024.0,374.9 1024.9,375.8 1025.9,378.0 1026.8,376.7 1027.7,376.8 1028.6,370.6 1029.5,373.2 1030.4,373.3 1031.3,374.4 1032.2,369.5 1033.1,373.1 1034.0,368.7 1034.9,368.8 1035.8,369.7 1036.7,369.1 1037.7,366.4 1038.6,366.5 1039.5,361.9 1040.4,358.7 1041.3,358.1 1042.2,356.2 1043.1,356.9 1044.0,353.8 1044.9,353.9 1045.8,354.6 1046.7,354.3 1047.6,353.2 1048.6,358.1 1049.5,359.6 1050.4,363.9 1051.3,362.0 1052.2,364.7 1053.1,366.6 1054.0,367.8 1054.9,366.6 1055.8,368.5 1056.7,366.3 1057.6,367.0 1058.5,366.0 1059.4,363.2 1060.4,363.5 1061.3,362.9 1062.2,363.1 1063.1,366.1 1064.0,369.1 1064.9,370.0 1065.8,372.4 1066.7,370.9 1067.6,373.3 1068.5,373.3 1069.4,374.1 1070.3,377.8 1071.3,376.4 1072.2,374.9 1073.1,376.7 1074.0,375.6 1074.9,377.3 1075.8,378.4 1076.7,377.5 1077.6,380.0 1078.5,376.3 1079.4,378.1 1080.3,375.5 1081.2,379.3 1082.1,377.5 1083.1,377.2 1084.0,378.1 1084.9,377.4 1085.8,379.1 1086.7,379.7 1087.6,380.3 1088.5,379.1 1089.4,379.6 1090.3,378.2 1091.2,379.1 1092.1,379.7 1093.0,379.9 1094.0,381.7 1094.9,379.5 1095.8,378.5 1096.7,381.1 1097.6,379.7 1098.5,378.4 1099.4,380.5" fill="none" stroke="#00ee00" stroke-width="1.2"/>
 <polyline points="736.2,376.5 737.1,374.9 738.0,377.6 738.9,375.1 739.8,376.5 740.7,376.4 741.6,373.6 742.6,375.7 743.5,375.9 744.4,374.8 745.3,374.2 746.2,375.8 747.1,375.1 748.0,377.1 748.9,376.5 749.8,376.7 750.7,377.9 751.6,378.2 752.5,378.4 753.5,376.8 754.4,376.8 755.3,376.5 756.2,375.4 757.1,376.7 758.0,374.6 758.9,373.6 759.8,372.5 760.7,373.9 761.6,372.8 762.5,374.3 763.4,371.9 764.3,374.4 765.3,373.7 766.2,370.9 767.1,375.4 768.0,372.0 768.9,372.9 769.8,374.0 770.7,373.4 771.6,373.7 772.5,373.3 773.4,375.2 774.3,375.9 775.2,376.1 776.2,376.9 777.1,375.9 778.0,377.1 778.9,375.0 779.8,378.9 780.7,378.2 781.6,378.3 782.5,379.7 783.4,374.7 784.3,380.1 785.2,377.4 786.1,377.7 787.0,375.0 788.0,379.6 788.9,375.7 789.8,378.0 790.7,377.3 791.6,378.0 792.5,376.4 793.4,378.7 794.3,377.4 795.2,376.9 796.1,375.1 797.0,380.5 797.9,375.7 798.9,376.5 799.8,378.3 800.7,377.4 801.6,378.4 802.5,375.8 803.4,377.7 804.3,378.3 805.2,378.2 806.1,378.1 807.0,378.0 807.9,378.7 808.8,375.0 809.7,379.9 810.7,381.9 811.6,377.4 812.5,377.3 813.4,376.6 814.3,377.2 815.2,377.1 816.1,376.4 817.0,375.5 817.9,377.1 818.8,376.4 819.7,372.9 820.6,374.0 821.6,375.2 822.5,370.5 823.4,371.8 824.3,361.5 825.2,350.3 826.1,336.5 827.0,325.9 827.9,314.2 828.8,323.2 829.7,330.9 830.6,337.6 831.5,348.2 832.4,346.9 833.4,341.6 834.3,339.8 835.2,339.5 836.1,339.7 837.0,342.1 837.9,349.1 838.8,356.1 839.7,364.5 840.6,366.0 841.5,368.8 842.4,374.1 843.3,378.3 844.3,378.2 845.2,378.6 846.1,378.4 847.0,377.7 847.9,378.1 848.8,377.3 849.7,378.6 850.6,376.0 851.5,376.3 852.4,377.6 853.3,379.0 854.2,376.0 855.1,374.4 856.1,376.6 857.0,376.2 857.9,376.1 858.8,374.5 859.7,376.3 860.6,373.8 861.5,375.3 862.4,373.6 863.3,374.6 864.2,374.8 865.1,376.3 866.0,375.2 867.0,374.6 867.9,373.3 868.8,373.8 869.7,374.9 870.6,373.4 871.5,372.5 872.4,373.9 873.3,374.3 874.2,374.3 875.1,372.9 876.0,373.3 876.9,375.2 877.8,373.6 878.8,374.7 879.7,375.1 880.6,372.7 881.5,373.3 882.4,375.3 883.3,374.4 884.2,373.9 885.1,375.4 886.0,374.8 886.9,372.7 887.8,374.6 888.7,370.8 889.7,369.1 890.6,368.2 891.5,371.7 892.4,370.8 893.3,373.4 894.2,372.8 895.1,373.9 896.0,374.4 896.9,375.6 897.8,375.4 898.7,373.6 899.6,375.8 900.5,374.0 901.5,374.0 902.4,375.0 903.3,371.7 904.2,374.6 905.1,372.0 906.0,377.2 906.9,377.5 907.8,373.4 908.7,373.9 909.6,375.0 910.5,374.7 911.4,377.0 912.4,375.4 913.3,376.0 914.2,374.9 915.1,373.5 916.0,374.6 916.9,374.2 917.8,375.5 918.7,375.1 919.6,374.4 920.5,374.8 921.4,372.8 922.3,375.4 923.2,371.8 924.2,375.4 925.1,372.7 926.0,375.0 926.9,371.9 927.8,373.7 928.7,373.3 929.6,372.8 930.5,374.4 931.4,374.9 932.3,376.0 933.2,371.9 934.1,374.2 935.1,374.0 936.0,373.2 936.9,370.8 937.8,375.6 938.7,373.2 939.6,374.1 940.5,373.0 941.4,376.0 942.3,374.4 943.2,372.9 944.1,372.1 945.0,372.2 945.9,375.3 946.9,374.3 947.8,374.6 948.7,376.3 949.6,376.5 950.5,373.8 951.4,374.5 952.3,375.1 953.2,373.5 954.1,376.4 955.0,374.5 955.9,375.1 956.8,375.1 957.8,374.4 958.7,374.8 959.6,374.7 960.5,374.6 961.4,372.5 962.3,375.3 963.2,373.6 964.1,374.1 965.0,375.3 965.9,373.8 966.8,375.9 967.7,373.3 968.6,375.8 969.6,375.3 970.5,374.3 971.4,373.6 972.3,373.5 973.2,373.4 974.1,374.6 975.0,375.4 975.9,373.4 976.8,373.6 977.7,375.0 978.6,372.4 979.5,373.2 980.5,374.6 981.4,372.7 982.3,374.7 983.2,374.0 984.1,372.3 985.0,374.6 985.9,372.4 986.8,374.0 987.7,371.3 988.6,373.0 989.5,371.7 990.4,373.6 991.3,372.2 992.3,370.7 993.2,371.3 994.1,374.3 995.0,370.8 995.9,370.9 996.8,372.6 997.7,370.4 998.6,373.5 999.5,372.3 1000.4,370.9 1001.3,370.7 1002.2,370.8 1003.2,373.8 1004.1,374.7 1005.0,372.0 1005.9,374.4 1006.8,372.8 1007.7,374.3 1008.6,371.4 1009.5,371.8 1010.4,372.1 1011.3,372.8 1012.2,372.9 1013.1,373.3 1014.0,372.5 1015.0,372.7 1015.9,372.5 1016.8,373.7 1017.7,370.8 1018.6,372.9 1019.5,371.6 1020.4,371.7 1021.3,374.5 1022.2,375.6 1023.1,371.9 1024.0,374.0 1024.9,373.5 1025.9,374.0 1026.8,373.5 1027.7,375.0 1028.6,373.4 1029.5,373.7 1030.4,372.9 1031.3,375.7 1032.2,371.5 1033.1,371.9 1034.0,374.3 1034.9,372.9 1035.8,371.7 1036.7,367.4 1037.7,364.7 1038.6,359.4 1039.5,357.6 1040.4,355.3 1041.3,351.4 1042.2,346.5 1043.1,345.1 1044.0,340.2 1044.9,336.9 1045.8,334.4 1046.7,335.7 1047.6,339.2 1048.6,340.9 1049.5,343.6 1050.4,347.0 1051.3,351.7 1052.2,353.9 1053.1,358.0 1054.0,362.0 1054.9,361.4 1055.8,362.5 1056.7,365.0 1057.6,364.3 1058.5,366.2 1059.4,367.6 1060.4,371.1 1061.3,373.6 1062.2,371.5 1063.1,372.2 1064.0,372.1 1064.9,372.8 1065.8,372.2 1066.7,374.5 1067.6,373.7 1068.5,376.1 1069.4,378.3 1070.3,376.3 1071.3,374.3 1072.2,378.7 1073.1,375.3 1074.0,377.4 1074.9,377.1 1075.8,376.5 1076.7,376.3 1077.6,377.8 1078.5,376.4 1079.4,376.0 1080.3,375.5 1081.2,377.5 1082.1,374.6 1083.1,374.2 1084.0,373.6 1084.9,378.3 1085.8,376.4 1086.7,379.0 1087.6,376.3 1088.5,376.2 1089.4,378.4 1090.3,379.1 1091.2,376.9 1092.1,376.5 1093.0,378.4 1094.0,377.8 1094.9,380.7 1095.8,378.5 1096.7,377.6 1097.6,377.6 1098.5,375.9 1099.4,379.5" fill="none" stroke="#ff0000" stroke-width="1.2"/>
 <rect x="826.5" y="417.5" width="145" height="15" fill="none" stroke="#000" stroke-width="1.2"/>
 <g font-family="Liberation Sans" font-size="10.5" letter-spacing="2">
  <line x1="829" y1="425.5" x2="844" y2="425.5" stroke="#3030ff"/><text x="848.5" y="429.3">457</text>
  <line x1="877" y1="425.5" x2="892" y2="425.5" stroke="#30ff30"/><text x="896.5" y="429.3">528</text>
  <line x1="925" y1="425.5" x2="940" y2="425.5" stroke="#ff3030"/><text x="944" y="429.3">617</text>
 </g>
 <text x="852" y="447" font-family="Liberation Sans" font-weight="bold" font-size="15" letter-spacing="1.6">Histogram</text>
 <rect x="715.3" y="454.4" width="402.2" height="77" fill="#fff" stroke="#b4b4b4" stroke-width="1"/>
 <g stroke="#d4d4d4" stroke-width="0.8" stroke-dasharray="2,2"><line x1="765.4" y1="454" x2="765.4" y2="531"/><line x1="815.5" y1="454" x2="815.5" y2="531"/><line x1="865.6" y1="454" x2="865.6" y2="531"/><line x1="915.7" y1="454" x2="915.7" y2="531"/><line x1="965.8" y1="454" x2="965.8" y2="531"/><line x1="1015.9" y1="454" x2="1015.9" y2="531"/><line x1="1066.0" y1="454" x2="1066.0" y2="531"/><line x1="1116.1" y1="454" x2="1116.1" y2="531"/><line x1="715" y1="510.4" x2="1117" y2="510.4"/><line x1="715" y1="489.4" x2="1117" y2="489.4"/><line x1="715" y1="468.4" x2="1117" y2="468.4"/></g>
 <path d="M792.6 531.4V520.9 M783.5 531.4V510.4 M811.4 531.4V520.9 M796.5 531.4V520.9 M812.4 531.4V520.9 M829.8 531.4V520.9 M794.0 531.4V510.4 M793.7 531.4V510.4 M777.1 531.4V520.9 M747.4 531.4V520.9 M749.8 531.4V510.4 M819.2 531.4V499.9 M815.0 531.4V499.9 M812.9 531.4V510.4 M789.7 531.4V510.4 M746.7 531.4V510.4 M741.5 531.4V510.4 M816.6 531.4V520.9 M780.5 531.4V510.4 M799.3 531.4V510.4 M805.9 531.4V510.4 M756.7 531.4V499.9 M829.8 531.4V510.4 M797.4 531.4V499.9 M812.1 531.4V510.4 M780.7 531.4V499.9 M765.2 531.4V520.9 M817.3 531.4V520.9 M766.2 531.4V510.4 M763.0 531.4V510.4 M793.2 531.4V510.4 M771.5 531.4V510.4 M819.2 531.4V520.9 M785.5 531.4V510.4 M814.3 531.4V510.4 M766.3 531.4V499.9 M805.3 531.4V510.4 M791.9 531.4V499.9 M828.2 531.4V520.9 M762.7 531.4V510.4 M785.6 531.4V520.9 M804.4 531.4V510.4 M781.9 531.4V520.9 M749.0 531.4V520.9 M777.8 531.4V520.9 M768.7 531.4V499.9 M774.6 531.4V499.9 M789.6 531.4V510.4 M832.7 531.4V499.9 M771.0 531.4V510.4 M765.5 531.4V510.4 M761.7 531.4V520.9 M769.6 531.4V499.9 M828.5 531.4V520.9 M758.1 531.4V510.4 M766.0 531.4V499.9 M830.9 531.4V499.9 M795.7 531.4V520.9 M817.5 531.4V510.4 M761.4 531.4V520.9 M768.4 531.4V499.9 M752.1 531.4V520.9 M830.7 531.4V499.9 M767.4 531.4V520.9 M799.5 531.4V510.4 M749.9 531.4V520.9 M793.6 531.4V510.4 M784.7 531.4V510.4 M757.4 531.4V520.9 M763.8 531.4V510.4 M750.9 531.4V520.9 M777.5 531.4V520.9 M793.8 531.4V520.9 M754.4 531.4V499.9 M828.3 531.4V520.9 M832.5 531.4V520.9 M792.1 531.4V510.4 M796.5 531.4V499.9 M761.3 531.4V499.9 M775.6 531.4V510.4 M767.9 531.4V499.9 M832.1 531.4V510.4 M793.1 531.4V520.9 M796.9 531.4V520.9 M828.2 531.4V520.9 M798.3 531.4V510.4 M801.6 531.4V520.9 M762.6 531.4V499.9 M747.3 531.4V520.9 M778.2 531.4V499.9 M783.9 531.4V520.9 M761.8 531.4V510.4 M805.5 531.4V510.4 M746.9 531.4V520.9 M826.0 531.4V499.9 M801.6 531.4V520.9 M779.8 531.4V499.9 M761.2 531.4V520.9 M824.5 531.4V520.9 M747.0 531.4V520.9 M813.8 531.4V499.9 M809.8 531.4V499.9 M825.7 531.4V510.4 M751.9 531.4V510.4 M805.2 531.4V510.4 M786.7 531.4V510.4 M780.9 531.4V499.9 M744.0 531.4V510.4 M808.4 531.4V499.9 M763.6 531.4V520.9 M771.1 531.4V489.4 M786.3 531.4V489.4 M780.1 531.4V510.4 M790.4 531.4V489.4 M786.0 531.4V489.4 M766.4 531.4V510.4 M777.2 531.4V489.4 M776.5 531.4V499.9 M769.9 531.4V489.4 M776.3 531.4V499.9 M789.7 531.4V499.9 M774.1 531.4V499.9 M773.4 531.4V510.4 M786.9 531.4V499.9 M775.7 531.4V499.9 M772.6 531.4V499.9 M785.8 531.4V489.4 M766.3 531.4V510.4 M773.3 531.4V499.9 M768.3 531.4V499.9 M787.1 531.4V510.4 M781.9 531.4V489.4 M777.0 531.4V510.4 M770.1 531.4V499.9 M781.0 531.4V499.9 M747.4 531.4V478.9 M750.4 531.4V489.4 M829.0 531.4V499.9 M777.9 531.4V489.4 M843.1 531.4V520.9 M846.6 531.4V520.9 M853.1 531.4V520.9 M870.6 531.4V520.9 M888.1 531.4V520.9 M895.7 531.4V520.9 M898.2 531.4V520.9" stroke="#00ff00" stroke-width="1.1" fill="none"/>
<path d="M783.0 531.4V510.4 M766.0 531.4V468.4 M763.1 531.4V510.4 M775.4 531.4V478.9 M762.8 531.4V499.9 M782.3 531.4V499.9 M786.3 531.4V489.4 M780.0 531.4V468.4 M774.2 531.4V499.9 M797.7 531.4V520.9 M776.4 531.4V510.4 M783.8 531.4V499.9 M777.9 531.4V489.4 M778.3 531.4V489.4 M774.5 531.4V478.9 M797.2 531.4V520.9 M776.2 531.4V499.9 M773.3 531.4V468.4 M778.3 531.4V499.9 M792.5 531.4V510.4 M788.9 531.4V510.4 M771.5 531.4V468.4 M768.6 531.4V510.4 M769.2 531.4V489.4 M791.5 531.4V499.9 M797.9 531.4V510.4 M792.6 531.4V510.4 M779.5 531.4V489.4 M771.2 531.4V468.4 M773.0 531.4V489.4 M792.7 531.4V499.9 M767.5 531.4V478.9 M767.2 531.4V478.9 M759.6 531.4V499.9 M776.8 531.4V478.9 M773.4 531.4V499.9 M777.7 531.4V510.4 M762.9 531.4V499.9 M771.2 531.4V510.4 M792.9 531.4V510.4 M761.9 531.4V510.4 M758.5 531.4V520.9 M774.3 531.4V499.9 M760.9 531.4V510.4 M771.5 531.4V478.9 M783.9 531.4V489.4 M792.0 531.4V499.9 M773.1 531.4V489.4 M783.0 531.4V478.9 M792.9 531.4V520.9 M782.6 531.4V499.9 M783.2 531.4V489.4 M797.9 531.4V499.9 M761.5 531.4V520.9 M788.4 531.4V499.9 M792.9 531.4V510.4 M764.6 531.4V510.4 M794.1 531.4V520.9 M770.9 531.4V510.4 M769.6 531.4V489.4 M775.1 531.4V499.9 M779.2 531.4V468.4 M785.2 531.4V499.9 M764.7 531.4V520.9 M782.3 531.4V478.9 M782.7 531.4V499.9 M777.8 531.4V468.4 M763.6 531.4V510.4 M783.5 531.4V478.9 M768.1 531.4V510.4 M793.9 531.4V510.4 M794.0 531.4V499.9 M779.8 531.4V510.4 M775.6 531.4V489.4 M797.5 531.4V510.4 M783.5 531.4V478.9 M785.6 531.4V478.9 M791.8 531.4V520.9 M797.9 531.4V510.4 M762.2 531.4V510.4 M770.4 531.4V457.9 M778.9 531.4V457.9 M762.9 531.4V468.4 M772.9 531.4V468.4 M784.9 531.4V468.4 M781.9 531.4V468.4 M789.4 531.4V489.4 M795.5 531.4V499.9 M816.6 531.4V520.9 M816.7 531.4V520.9 M830.3 531.4V520.9 M807.6 531.4V520.9 M829.8 531.4V520.9 M819.4 531.4V520.9 M845.6 531.4V520.9 M848.1 531.4V520.9 M863.1 531.4V520.9 M868.1 531.4V520.9 M875.6 531.4V520.9 M883.1 531.4V520.9 M915.7 531.4V520.9 M918.2 531.4V520.9 M925.7 531.4V520.9 M940.8 531.4V520.9 M943.3 531.4V520.9 M953.3 531.4V520.9 M965.8 531.4V520.9 M966.8 531.4V520.9 M980.8 531.4V520.9 M983.3 531.4V520.9 M985.8 531.4V520.9 M988.3 531.4V520.9 M993.4 531.4V520.9 M1003.4 531.4V510.4 M1020.9 531.4V520.9 M1040.9 531.4V520.9 M1061.0 531.4V520.9 M1098.6 531.4V520.9" stroke="#ff0000" stroke-width="1.1" fill="none"/>
<path d="M798.4 531.4V520.9 M753.3 531.4V520.9 M810.4 531.4V520.9 M829.7 531.4V520.9 M771.5 531.4V520.9 M746.4 531.4V520.9 M722.6 531.4V520.9 M799.7 531.4V520.9 M746.6 531.4V520.9 M819.5 531.4V520.9 M819.0 531.4V520.9 M761.4 531.4V520.9 M837.8 531.4V520.9 M730.8 531.4V520.9 M824.2 531.4V520.9 M819.2 531.4V520.9 M785.7 531.4V510.4 M766.2 531.4V520.9 M821.9 531.4V520.9 M825.9 531.4V520.9 M806.5 531.4V520.9 M747.5 531.4V520.9 M729.2 531.4V520.9 M731.8 531.4V520.9 M798.0 531.4V520.9 M765.1 531.4V520.9 M752.3 531.4V510.4 M799.5 531.4V520.9 M740.5 531.4V520.9 M739.5 531.4V520.9 M841.8 531.4V520.9 M788.2 531.4V520.9 M823.6 531.4V520.9 M747.7 531.4V520.9 M758.3 531.4V520.9 M745.4 531.4V510.4 M827.8 531.4V520.9 M800.4 531.4V520.9 M832.5 531.4V520.9 M752.1 531.4V520.9 M788.8 531.4V520.9 M791.6 531.4V520.9 M768.7 531.4V520.9 M842.8 531.4V520.9 M730.6 531.4V520.9 M732.9 531.4V520.9 M817.3 531.4V520.9 M727.2 531.4V520.9 M842.6 531.4V520.9 M839.5 531.4V520.9 M720.7 531.4V520.9 M803.7 531.4V520.9 M752.3 531.4V520.9 M733.1 531.4V520.9 M775.5 531.4V510.4 M827.7 531.4V520.9 M781.3 531.4V520.9 M832.2 531.4V520.9 M756.2 531.4V520.9 M794.7 531.4V520.9 M813.7 531.4V520.9 M815.7 531.4V520.9 M719.4 531.4V520.9 M721.7 531.4V510.4 M828.0 531.4V520.9 M757.4 531.4V520.9 M828.0 531.4V510.4 M729.9 531.4V520.9 M727.9 531.4V520.9 M814.1 531.4V520.9 M778.1 531.4V520.9 M752.1 531.4V520.9 M771.7 531.4V520.9 M786.0 531.4V520.9 M744.2 531.4V520.9 M842.5 531.4V520.9 M773.5 531.4V520.9 M734.3 531.4V520.9 M761.1 531.4V520.9 M747.8 531.4V520.9 M728.1 531.4V520.9 M747.6 531.4V510.4 M825.7 531.4V520.9 M748.8 531.4V520.9 M745.8 531.4V520.9 M835.1 531.4V520.9 M777.8 531.4V520.9 M819.2 531.4V520.9 M731.3 531.4V520.9 M771.7 531.4V520.9 M809.5 531.4V520.9 M841.1 531.4V520.9 M769.1 531.4V520.9 M825.9 531.4V520.9 M742.8 531.4V520.9 M771.5 531.4V520.9 M750.2 531.4V510.4 M774.1 531.4V520.9 M787.4 531.4V520.9 M843.0 531.4V520.9 M839.2 531.4V510.4 M824.3 531.4V520.9 M779.4 531.4V520.9 M768.9 531.4V520.9 M766.2 531.4V510.4 M752.1 531.4V520.9 M775.6 531.4V520.9 M837.8 531.4V510.4 M788.1 531.4V520.9 M738.5 531.4V520.9 M839.2 531.4V520.9 M786.4 531.4V520.9 M726.4 531.4V520.9 M781.5 531.4V520.9 M738.8 531.4V510.4 M729.2 531.4V520.9 M792.9 531.4V520.9 M748.4 531.4V520.9 M829.5 531.4V520.9 M792.9 531.4V520.9 M771.2 531.4V520.9 M784.0 531.4V510.4 M744.6 531.4V520.9 M748.8 531.4V520.9 M802.4 531.4V520.9 M758.4 531.4V520.9 M728.3 531.4V520.9 M842.9 531.4V510.4 M728.4 531.4V520.9 M752.1 531.4V510.4 M828.3 531.4V520.9 M765.0 531.4V520.9 M822.5 531.4V520.9 M795.0 531.4V510.4 M800.2 531.4V520.9 M820.4 531.4V520.9 M801.4 531.4V510.4 M735.9 531.4V520.9 M732.6 531.4V520.9 M753.0 531.4V520.9 M808.1 531.4V520.9 M797.8 531.4V520.9 M779.8 531.4V510.4 M824.0 531.4V520.9 M771.7 531.4V520.9 M719.7 531.4V520.9 M798.1 531.4V520.9 M811.0 531.4V520.9 M772.2 531.4V520.9 M728.6 531.4V520.9 M831.2 531.4V520.9 M822.6 531.4V520.9 M737.6 531.4V520.9 M757.5 531.4V520.9 M817.8 531.4V520.9 M830.5 531.4V520.9 M750.2 531.4V520.9 M815.8 531.4V520.9 M769.6 531.4V520.9 M738.4 531.4V510.4 M826.3 531.4V510.4 M819.6 531.4V520.9 M722.4 531.4V520.9 M760.4 531.4V510.4 M818.6 531.4V520.9 M819.6 531.4V520.9 M816.7 531.4V520.9 M827.2 531.4V520.9 M746.8 531.4V520.9 M776.3 531.4V520.9 M817.7 531.4V520.9 M722.2 531.4V520.9 M759.9 531.4V520.9 M839.0 531.4V520.9 M798.7 531.4V520.9 M840.7 531.4V520.9 M835.5 531.4V520.9 M839.4 531.4V520.9 M838.4 531.4V520.9 M732.7 531.4V520.9 M809.5 531.4V520.9 M794.3 531.4V520.9 M767.0 531.4V520.9 M750.8 531.4V520.9 M719.5 531.4V510.4 M785.9 531.4V520.9 M811.1 531.4V520.9 M764.4 531.4V520.9 M801.5 531.4V520.9 M758.2 531.4V520.9 M808.4 531.4V520.9 M757.6 531.4V520.9 M769.1 531.4V520.9 M735.1 531.4V520.9 M835.7 531.4V520.9 M831.0 531.4V520.9 M756.5 531.4V520.9 M719.4 531.4V520.9 M772.5 531.4V520.9 M800.3 531.4V520.9 M774.0 531.4V520.9 M777.9 531.4V510.4 M817.8 531.4V520.9 M729.8 531.4V520.9 M797.6 531.4V520.9 M820.6 531.4V520.9 M802.6 531.4V520.9 M743.9 531.4V520.9 M749.6 531.4V520.9 M824.5 531.4V520.9 M770.6 531.4V520.9 M743.4 531.4V520.9 M780.5 531.4V520.9 M800.5 531.4V520.9 M812.2 531.4V520.9 M732.5 531.4V520.9 M741.1 531.4V510.4 M783.4 531.4V520.9 M750.1 531.4V520.9 M775.8 531.4V520.9 M801.9 531.4V510.4 M793.0 531.4V510.4 M829.6 531.4V520.9 M808.3 531.4V520.9 M822.1 531.4V520.9 M830.3 531.4V520.9 M778.0 531.4V520.9 M749.9 531.4V520.9 M814.1 531.4V520.9 M796.9 531.4V520.9 M728.9 531.4V520.9 M752.9 531.4V520.9 M786.2 531.4V520.9 M747.9 531.4V520.9 M806.7 531.4V520.9 M769.7 531.4V520.9 M770.8 531.4V520.9 M771.3 531.4V510.4 M791.6 531.4V520.9 M825.3 531.4V520.9 M731.7 531.4V510.4 M748.6 531.4V499.9 M743.0 531.4V499.9 M736.5 531.4V489.4 M744.4 531.4V510.4 M735.0 531.4V499.9 M733.4 531.4V510.4 M732.0 531.4V499.9 M742.1 531.4V499.9 M748.0 531.4V489.4 M736.4 531.4V499.9 M738.1 531.4V510.4 M722.8 531.4V499.9 M724.4 531.4V499.9 M725.8 531.4V499.9 M731.7 531.4V510.4 M734.0 531.4V499.9 M743.2 531.4V499.9 M728.7 531.4V499.9 M727.9 531.4V510.4 M734.4 531.4V489.4 M721.9 531.4V499.9 M727.1 531.4V510.4 M743.8 531.4V510.4 M743.0 531.4V510.4 M726.3 531.4V510.4 M739.0 531.4V510.4 M724.1 531.4V510.4 M724.8 531.4V457.9 M726.1 531.4V478.9 M731.8 531.4V478.9 M723.3 531.4V489.4 M727.8 531.4V489.4 M721.3 531.4V510.4 M729.8 531.4V499.9 M735.3 531.4V499.9 M743.4 531.4V510.4 M747.4 531.4V499.9" stroke="#0000ff" stroke-width="1.1" fill="none"/>
 <g font-family="Liberation Sans" font-size="10" fill="#222" text-anchor="end">
  <text x="710" y="535">0</text><text x="710" y="514">2</text><text x="710" y="493">4</text><text x="710" y="472">6</text>
 </g>
 <g font-family="Liberation Sans" font-size="10" fill="#222" text-anchor="middle" letter-spacing="0.6">
  <text x="715.3" y="541">0</text><text x="765.4" y="541">1,000</text><text x="815.5" y="541">2,000</text><text x="865.6" y="541">3,000</text><text x="915.7" y="541">4,000</text><text x="965.8" y="541">5,000</text><text x="1015.9" y="541">6,000</text><text x="1066.0" y="541">7,000</text><text x="1116.1" y="541">8,000</text>
 </g>
 <text x="916" y="552.5" font-family="Liberation Sans" font-size="11" text-anchor="middle" letter-spacing="0.6">Intensity</text>
 <text transform="translate(695 492) rotate(-90)" font-family="Liberation Sans" font-size="11" text-anchor="middle" letter-spacing="-0.3">Frequency</text>
 <rect x="839" y="561.5" width="120" height="15" fill="none" stroke="#000" stroke-width="1.2"/>
 <g font-family="Liberation Sans" font-size="10.5" letter-spacing="2">
  <rect x="842" y="565" width="6" height="8" fill="#0000ff"/><text x="851" y="573">457</text>
  <rect x="881" y="565" width="6" height="8" fill="#00ff00"/><text x="890" y="573">528</text>
  <rect x="920" y="565" width="6" height="8" fill="#ff0000"/><text x="929" y="573">617</text>
 </g>
</svg>
<div class="a" style="left:1131px;top:418px;width:85px;height:21px;background:#fff;border:1px solid #b8b8b8;border-radius:4px"></div>
<div class="t" style="left:1146px;top:421.5px;font-size:14px">Export...</div>
<!-- status -->
<div class="a" style="left:656px;top:592px;width:576px;height:30px;background:#ececec;border-top:1px solid #a8a8a8;border-bottom:1px solid #b8b8b8"></div>
<div class="a" style="left:656px;top:593px;width:576px;height:1px;background:#fff"></div>
<div class="t" style="left:668.5px;top:600px;font-size:14px">Ready.</div>


</body></html>
